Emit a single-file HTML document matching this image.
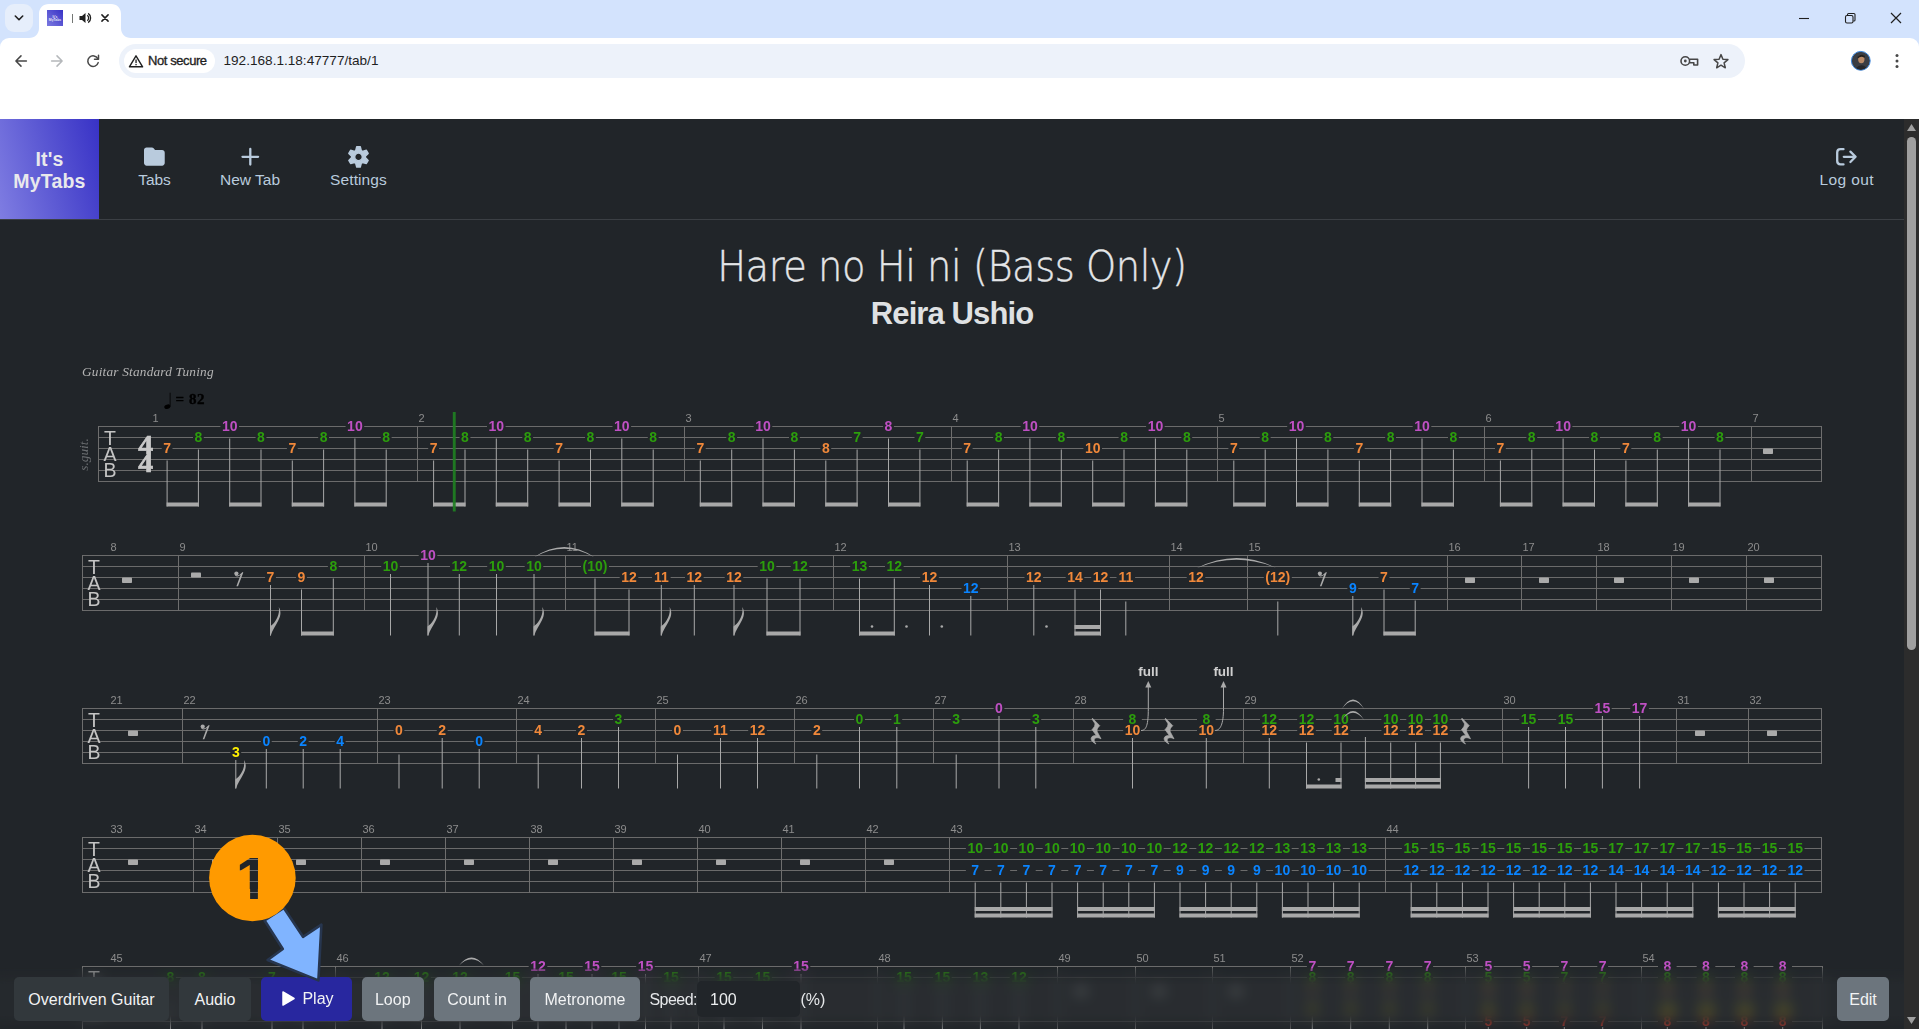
<!DOCTYPE html>
<html lang="en"><head><meta charset="utf-8"><title>It's MyTabs</title>
<style>
html,body{margin:0;padding:0}
body{width:1919px;height:1029px;overflow:hidden;position:relative;background:#212529;font-family:"Liberation Sans",sans-serif;color:#dee2e6}
.abs{position:absolute}
#tabstrip{left:0;top:0;width:1919px;height:52px;background:#d3e3fd}
#toolbar{left:0;top:38px;width:1919px;height:81px;background:#fff;border-radius:9px 9px 0 0}
#urlpill{left:119px;top:44px;width:1626px;height:34px;border-radius:17px;background:#edf2fa}
#chip{left:124px;top:49px;width:91px;height:24px;border-radius:12px;background:#fff}
.ctext{color:#1f1f1f;white-space:nowrap}
#logo{left:0;top:119px;width:99px;height:100px;background:linear-gradient(75deg,#7f7de2 0%,#5b58d3 50%,#3832c6 100%)}
#logo div{position:absolute;left:0;width:99px;text-align:center;color:#e9e9ec;font-weight:bold;font-size:19.5px;line-height:22px;letter-spacing:0.2px}
#hdrline{left:0;top:219px;width:1904px;height:1px;background:#3b3f44}
.nav{color:#b9cbdd;font-size:15.5px;white-space:nowrap;transform:translateX(-50%);line-height:18px}
#title{left:0;top:241px;-webkit-text-stroke:0.4px #e4e6e8;width:1904px;text-align:center;font-size:42.5px;line-height:52px;color:#e4e6e8;white-space:nowrap;font-family:"DejaVu Sans","Liberation Sans",sans-serif;font-weight:200}
#title span{display:inline-block;transform:scaleX(0.903);transform-origin:50% 50%;letter-spacing:-0.5px}
#artist{left:0;top:294.5px;width:1904px;text-align:center;font-size:31px;line-height:38px;font-weight:bold;color:#dfe1e3;letter-spacing:-0.9px;white-space:nowrap}
svg text.n{font-family:"Liberation Sans",sans-serif;font-weight:bold;font-size:14px;text-anchor:middle}
svg text.bn{font-family:"Liberation Sans",sans-serif;font-size:11px;fill:#8c8c8c}
svg text.clef{font-family:"Liberation Sans",sans-serif;font-size:19.5px;fill:#c4c4c4;text-anchor:middle}
svg text.ts{font-family:"Liberation Serif",serif;font-weight:bold;font-size:27px;fill:#c8c8c8;stroke:#c8c8c8;stroke-width:0.7px;text-anchor:middle}
svg text.full{font-family:"Liberation Sans",sans-serif;font-weight:bold;font-size:13.5px;fill:#cfcfcf;text-anchor:middle}
#blur{left:0;top:968px;width:1904px;height:61px;background:rgba(42,46,49,0.55);-webkit-backdrop-filter:blur(7px);backdrop-filter:blur(7px);-webkit-mask-image:linear-gradient(to bottom,rgba(0,0,0,0.3) 0,#000 26%,#000 78%,rgba(0,0,0,0.35) 100%);mask-image:linear-gradient(to bottom,rgba(0,0,0,0.3) 0,#000 26%,#000 78%,rgba(0,0,0,0.35) 100%)}
.btn{top:977px;height:44px;border-radius:5px;font-size:16px;line-height:45.5px;text-align:center;color:#f2f3f4;white-space:nowrap}
.dark{background:#32383c}
.sec{background:#6c757d}
#sb{left:1904px;top:119px;width:15px;height:910px;background:#2c2c2c}
#thumb{left:1907px;top:137px;width:9px;height:513px;border-radius:5px;background:#9f9f9f}
</style></head><body>
<!-- browser chrome -->
<div class="abs" id="tabstrip"></div>
<div class="abs" style="left:5px;top:4px;width:28px;height:28px;border-radius:9px;background:#e6eefb"></div>
<div class="abs" id="toolbar"></div>
<svg class="abs" style="left:0;top:0" width="1919" height="120" viewBox="0 0 1919 120">
  <path d="M29,38 C35,38 39,34 39,28 L39,14 C39,8 43,4 49,4 L111,4 C117,4 121,8 121,14 L121,28 C121,34 125,38 131,38 Z" fill="#fff"/>
  <path d="M15.3,16 L19,19.700 L22.700,16" fill="none" stroke="#1f1f1f" stroke-width="1.6" stroke-linecap="round" stroke-linejoin="round"/>
  <defs><linearGradient id="fav" x1="0" y1="1" x2="1" y2="0"><stop offset="0" stop-color="#7b79e0"/><stop offset="1" stop-color="#3832c6"/></linearGradient></defs>
  <rect x="47" y="10" width="16" height="16" fill="url(#fav)"/>
  <text x="55" y="17.600" text-anchor="middle" font-family="Liberation Sans, sans-serif" font-weight="bold" font-size="3.400" fill="#e6e6f6">It&#39;s</text><text x="55" y="21.400" text-anchor="middle" font-family="Liberation Sans, sans-serif" font-weight="bold" font-size="3.400" fill="#e6e6f6">MyTabs</text>
  <rect x="72" y="14" width="1" height="9" fill="#747775"/>
  <path d="M79.500,16 L82,16 L85.500,13 L85.500,23 L82,20 L79.500,20 Z" fill="#1f1f1f"/>
  <path d="M87.300,15.200 A3.600,3.600 0 0 1 87.300,20.800 M88.200,13.400 A5.600,5.600 0 0 1 88.200,22.600" fill="none" stroke="#1f1f1f" stroke-width="1.300"/>
  <path d="M101.900,14.900 L108.100,21.100 M108.100,14.900 L101.900,21.100" stroke="#1f1f1f" stroke-width="1.500" stroke-linecap="round"/>
  <!-- window controls -->
  <path d="M1799,18.500 L1809,18.500" stroke="#1f1f1f" stroke-width="1.100"/>
  <rect x="1845.500" y="15.500" width="7.500" height="7.500" rx="1.500" fill="none" stroke="#1f1f1f" stroke-width="1.100"/>
  <path d="M1847.500,15.300 L1847.500,14.600 Q1847.500,13.500 1848.600,13.500 L1853.900,13.500 Q1855,13.500 1855,14.600 L1855,19.900 Q1855,21 1853.900,21 L1853.300,21" fill="none" stroke="#1f1f1f" stroke-width="1.100"/>
  <path d="M1891,13 L1901,23 M1901,13 L1891,23" stroke="#1f1f1f" stroke-width="1.200"/>
  <!-- nav buttons -->
  <path d="M26.400,61 L16.300,61 M21,55.900 L15.900,61 L21,66.100" fill="none" stroke="#474747" stroke-width="1.500" stroke-linecap="round" stroke-linejoin="round"/>
  <path d="M51.600,61 L61.700,61 M57,55.900 L62.100,61 L57,66.100" fill="none" stroke="#b5b8bb" stroke-width="1.500" stroke-linecap="round" stroke-linejoin="round"/>
  <path d="M97.800,58.700 A5.300,5.300 0 1 0 98.200,62.600" fill="none" stroke="#474747" stroke-width="1.500" stroke-linecap="round"/>
  <path d="M98.500,55.200 L98.500,59.200 L94.500,59.200" fill="none" stroke="#474747" stroke-width="1.500" stroke-linecap="round" stroke-linejoin="round"/>
</svg>
<div class="abs" id="urlpill"></div>
<div class="abs" id="chip"></div>
<svg class="abs" style="left:0;top:38px" width="1919" height="48" viewBox="0 38 1919 48">
  <path d="M136,55.800 L142.600,66.800 L129.400,66.800 Z" fill="none" stroke="#1f1f1f" stroke-width="1.400" stroke-linejoin="round"/>
  <rect x="135.400" y="59.500" width="1.300" height="3.600" fill="#1f1f1f"/><rect x="135.400" y="64" width="1.300" height="1.300" fill="#1f1f1f"/>
  <!-- key -->
  <circle cx="1685.300" cy="61" r="4.300" fill="none" stroke="#474747" stroke-width="1.600"/><circle cx="1685.300" cy="61" r="1.400" fill="#474747"/>
  <path d="M1689.500,59.300 L1697.600,59.300 L1697.600,65 L1693.800,65 L1693.800,62.800 L1689.400,62.800" fill="none" stroke="#474747" stroke-width="1.600" stroke-linejoin="round"/>
  <!-- star -->
  <path d="M1721,54.600 L1722.900,59.200 L1727.900,59.600 L1724.100,62.900 L1725.300,67.800 L1721,65.200 L1716.700,67.800 L1717.900,62.900 L1714.100,59.600 L1719.100,59.200 Z" fill="none" stroke="#474747" stroke-width="1.500" stroke-linejoin="round"/>
  <!-- avatar -->
  <circle cx="1860.800" cy="60.800" r="9.400" fill="#3a3d44" stroke="#3f8ae0" stroke-width="1"/>
  <ellipse cx="1861.300" cy="59" rx="3.200" ry="4.200" fill="#b98a68"/><path d="M1857.500,57 Q1860.500,52.500 1865,56 L1864.500,58 Q1861,55.500 1857.800,58.500 Z" fill="#22201f"/>
  <path d="M1856,68 Q1861,63 1866.500,67.500 Q1861.500,71.500 1856,68 Z" fill="#26272b"/>
  <circle cx="1897" cy="55.600" r="1.500" fill="#474747"/><circle cx="1897" cy="61" r="1.500" fill="#474747"/><circle cx="1897" cy="66.400" r="1.500" fill="#474747"/>
</svg>
<div class="abs ctext" id="notsecure" style="left:148px;top:52px;font-size:13px;line-height:18px;letter-spacing:-0.42px;color:#1f1f1f;-webkit-text-stroke:0.35px #1f1f1f">Not secure</div>
<div class="abs ctext" id="url" style="left:223.500px;top:51px;font-size:13.600px;line-height:20px">192.168.1.18:47777/tab/1</div>

<!-- app header -->
<div class="abs" id="logo"><div style="top:29px">It's</div><div style="top:51px">MyTabs</div></div>
<div class="abs" id="hdrline"></div>
<svg class="abs" style="left:100px;top:140px" width="1804" height="36" viewBox="100 140 1804 36">
  <g transform="translate(144,146.200) scale(0.0405)"><path d="M64 480H448c35.300 0 64-28.700 64-64V160c0-35.300-28.700-64-64-64H288c-10.100 0-19.600-4.700-25.600-12.800L243.200 57.600C231.100 41.500 212.100 32 192 32H64C28.700 32 0 60.700 0 96V416c0 35.300 28.700 64 64 64z" fill="#b9cbdd"/></g>
  <path d="M250.300,149 L250.300,164.600 M242.500,156.800 L258.100,156.800" stroke="#b9cbdd" stroke-width="2.300" stroke-linecap="round"/>
  <path d="M355.69,150.60 L356.71,146.76 L360.29,146.76 L361.31,150.60 L362.56,151.32 L366.39,150.28 L368.18,153.38 L365.36,156.18 L365.36,157.62 L368.18,160.42 L366.39,163.52 L362.56,162.48 L361.31,163.20 L360.29,167.04 L356.71,167.04 L355.69,163.20 L354.44,162.48 L350.61,163.52 L348.82,160.42 L351.64,157.62 L351.64,156.18 L348.82,153.38 L350.61,150.28 L354.44,151.32 Z M362.30,156.90 A3.8,3.8 0 1,0 354.70,156.90 A3.8,3.8 0 1,0 362.30,156.90 Z" fill="#b9cbdd" fill-rule="evenodd" stroke="#b9cbdd" stroke-width="1.400" stroke-linejoin="round"/>
  <path d="M1843.500,149.200 L1840.500,149.200 Q1837.200,149.200 1837.200,152.500 L1837.200,161.100 Q1837.200,164.400 1840.500,164.400 L1843.500,164.400" fill="none" stroke="#b9cbdd" stroke-width="2.300" stroke-linecap="round"/>
  <path d="M1843.800,156.800 L1855,156.800 M1850.400,151.600 L1855.600,156.800 L1850.400,162" fill="none" stroke="#b9cbdd" stroke-width="2.300" stroke-linecap="round" stroke-linejoin="round"/>
</svg>
<div class="abs nav" style="left:154.500px;top:171px;letter-spacing:-0.1px">Tabs</div>
<div class="abs nav" style="left:250px;top:171px">New Tab</div>
<div class="abs nav" style="left:358.500px;top:171px;letter-spacing:0.1px">Settings</div>
<div class="abs nav" style="left:1846.800px;top:171px;letter-spacing:0.4px">Log out</div>

<div class="abs" id="title"><span>Hare no Hi ni (Bass Only)</span></div>
<div class="abs" id="artist">Reira Ushio</div>

<!-- score -->
<svg class="abs" style="left:0;top:355px;will-change:transform" width="1904" height="674" viewBox="0 355 1904 674">
<text x="82" y="375.800" font-family="Liberation Serif, serif" font-style="italic" font-size="13.300" letter-spacing="0.2" fill="#b4b4b4">Guitar Standard Tuning</text>
<text transform="translate(88,454.500) rotate(-90)" text-anchor="middle" font-family="Liberation Serif, serif" font-style="italic" font-size="13.300" fill="#6a6d70">s.guit.</text>
<ellipse cx="167.300" cy="406.700" rx="3.100" ry="2.100" transform="rotate(-20 167.300 406.700)" fill="#000"/><rect x="169.700" y="392.700" width="0.800" height="14" fill="#000"/>
<text x="175.500" y="403.600" font-family="Liberation Serif, serif" font-weight="bold" font-size="15" letter-spacing="0.6" fill="#000" stroke="#000" stroke-width="0.4">= 82</text>
<rect x="98" y="426" width="1724" height="1" fill="#6b6b6b"/>
<rect x="98" y="437" width="1724" height="1" fill="#6b6b6b"/>
<rect x="98" y="448" width="1724" height="1" fill="#6b6b6b"/>
<rect x="98" y="459" width="1724" height="1" fill="#6b6b6b"/>
<rect x="98" y="470" width="1724" height="1" fill="#6b6b6b"/>
<rect x="98" y="481" width="1724" height="1" fill="#6b6b6b"/>
<rect x="98" y="426" width="1" height="56" fill="#6e6e6e"/>
<rect x="417" y="426" width="1" height="56" fill="#6e6e6e"/>
<rect x="684" y="426" width="1" height="56" fill="#6e6e6e"/>
<rect x="951" y="426" width="1" height="56" fill="#6e6e6e"/>
<rect x="1217" y="426" width="1" height="56" fill="#6e6e6e"/>
<rect x="1484" y="426" width="1" height="56" fill="#6e6e6e"/>
<rect x="1751" y="426" width="1" height="56" fill="#6e6e6e"/>
<rect x="1821" y="426" width="1" height="56" fill="#6e6e6e"/>
<text x="152.5" y="422" class="bn">1</text>
<text x="418.5" y="422" class="bn">2</text>
<text x="685.5" y="422" class="bn">3</text>
<text x="952.5" y="422" class="bn">4</text>
<text x="1218.5" y="422" class="bn">5</text>
<text x="1485.5" y="422" class="bn">6</text>
<text x="1752.5" y="422" class="bn">7</text>
<text x="110" y="444.5" class="clef">T</text>
<text x="110" y="460.5" class="clef">A</text>
<text x="110" y="476.5" class="clef">B</text>
<text transform="translate(145.7,453.8) scale(1.1,1)" class="ts">4</text>
<text transform="translate(145.7,471.8) scale(1.1,1)" class="ts">4</text>
<rect x="166.6" y="502.5" width="32.3" height="4" fill="#a8a8a8"/>
<rect x="229.2" y="502.5" width="32.3" height="4" fill="#a8a8a8"/>
<rect x="291.8" y="502.5" width="32.3" height="4" fill="#a8a8a8"/>
<rect x="354.4" y="502.5" width="32.3" height="4" fill="#a8a8a8"/>
<rect x="166.6" y="460.5" width="1" height="46" fill="#a8a8a8"/>
<rect x="161.7" y="447" width="10.8" height="3" fill="#212529"/>
<text x="167.1" y="452.6" class="n" fill="#f0883a">7</text>
<rect x="197.9" y="449.5" width="1" height="57" fill="#a8a8a8"/>
<rect x="193" y="436" width="10.8" height="3" fill="#212529"/>
<text x="198.4" y="441.6" class="n" fill="#2c9e0c">8</text>
<rect x="229.2" y="438.5" width="1" height="68" fill="#a8a8a8"/>
<rect x="220.4" y="425" width="18.6" height="3" fill="#212529"/>
<text x="229.7" y="430.6" class="n" fill="#bf50c3">10</text>
<rect x="260.5" y="449.5" width="1" height="57" fill="#a8a8a8"/>
<rect x="255.6" y="436" width="10.8" height="3" fill="#212529"/>
<text x="261" y="441.6" class="n" fill="#2c9e0c">8</text>
<rect x="291.8" y="460.5" width="1" height="46" fill="#a8a8a8"/>
<rect x="286.9" y="447" width="10.8" height="3" fill="#212529"/>
<text x="292.3" y="452.6" class="n" fill="#f0883a">7</text>
<rect x="323.1" y="449.5" width="1" height="57" fill="#a8a8a8"/>
<rect x="318.2" y="436" width="10.8" height="3" fill="#212529"/>
<text x="323.6" y="441.6" class="n" fill="#2c9e0c">8</text>
<rect x="354.4" y="438.5" width="1" height="68" fill="#a8a8a8"/>
<rect x="345.6" y="425" width="18.6" height="3" fill="#212529"/>
<text x="354.9" y="430.6" class="n" fill="#bf50c3">10</text>
<rect x="385.7" y="449.5" width="1" height="57" fill="#a8a8a8"/>
<rect x="380.8" y="436" width="10.8" height="3" fill="#212529"/>
<text x="386.2" y="441.6" class="n" fill="#2c9e0c">8</text>
<rect x="433.1" y="502.5" width="32.4" height="4" fill="#a8a8a8"/>
<rect x="495.8" y="502.5" width="32.4" height="4" fill="#a8a8a8"/>
<rect x="558.6" y="502.5" width="32.4" height="4" fill="#a8a8a8"/>
<rect x="621.3" y="502.5" width="32.4" height="4" fill="#a8a8a8"/>
<rect x="433.1" y="460.5" width="1" height="46" fill="#a8a8a8"/>
<rect x="428.2" y="447" width="10.8" height="3" fill="#212529"/>
<text x="433.6" y="452.6" class="n" fill="#f0883a">7</text>
<rect x="464.5" y="449.5" width="1" height="57" fill="#a8a8a8"/>
<rect x="459.6" y="436" width="10.8" height="3" fill="#212529"/>
<text x="464.97" y="441.6" class="n" fill="#2c9e0c">8</text>
<rect x="495.8" y="438.5" width="1" height="68" fill="#a8a8a8"/>
<rect x="487" y="425" width="18.6" height="3" fill="#212529"/>
<text x="496.34" y="430.6" class="n" fill="#bf50c3">10</text>
<rect x="527.2" y="449.5" width="1" height="57" fill="#a8a8a8"/>
<rect x="522.3" y="436" width="10.8" height="3" fill="#212529"/>
<text x="527.71" y="441.6" class="n" fill="#2c9e0c">8</text>
<rect x="558.6" y="460.5" width="1" height="46" fill="#a8a8a8"/>
<rect x="553.7" y="447" width="10.8" height="3" fill="#212529"/>
<text x="559.08" y="452.6" class="n" fill="#f0883a">7</text>
<rect x="590" y="449.5" width="1" height="57" fill="#a8a8a8"/>
<rect x="585.1" y="436" width="10.8" height="3" fill="#212529"/>
<text x="590.45" y="441.6" class="n" fill="#2c9e0c">8</text>
<rect x="621.3" y="438.5" width="1" height="68" fill="#a8a8a8"/>
<rect x="612.5" y="425" width="18.6" height="3" fill="#212529"/>
<text x="621.82" y="430.6" class="n" fill="#bf50c3">10</text>
<rect x="652.7" y="449.5" width="1" height="57" fill="#a8a8a8"/>
<rect x="647.8" y="436" width="10.8" height="3" fill="#212529"/>
<text x="653.19" y="441.6" class="n" fill="#2c9e0c">8</text>
<rect x="699.8" y="502.5" width="32.4" height="4" fill="#a8a8a8"/>
<rect x="762.5" y="502.5" width="32.4" height="4" fill="#a8a8a8"/>
<rect x="825.3" y="502.5" width="32.4" height="4" fill="#a8a8a8"/>
<rect x="888" y="502.5" width="32.4" height="4" fill="#a8a8a8"/>
<rect x="699.8" y="460.5" width="1" height="46" fill="#a8a8a8"/>
<rect x="694.9" y="447" width="10.8" height="3" fill="#212529"/>
<text x="700.3" y="452.6" class="n" fill="#f0883a">7</text>
<rect x="731.2" y="449.5" width="1" height="57" fill="#a8a8a8"/>
<rect x="726.3" y="436" width="10.8" height="3" fill="#212529"/>
<text x="731.67" y="441.6" class="n" fill="#2c9e0c">8</text>
<rect x="762.5" y="438.5" width="1" height="68" fill="#a8a8a8"/>
<rect x="753.7" y="425" width="18.6" height="3" fill="#212529"/>
<text x="763.04" y="430.6" class="n" fill="#bf50c3">10</text>
<rect x="793.9" y="449.5" width="1" height="57" fill="#a8a8a8"/>
<rect x="789" y="436" width="10.8" height="3" fill="#212529"/>
<text x="794.41" y="441.6" class="n" fill="#2c9e0c">8</text>
<rect x="825.3" y="460.5" width="1" height="46" fill="#a8a8a8"/>
<rect x="820.4" y="447" width="10.8" height="3" fill="#212529"/>
<text x="825.78" y="452.6" class="n" fill="#f0883a">8</text>
<rect x="856.6" y="449.5" width="1" height="57" fill="#a8a8a8"/>
<rect x="851.8" y="436" width="10.8" height="3" fill="#212529"/>
<text x="857.15" y="441.6" class="n" fill="#2c9e0c">7</text>
<rect x="888" y="438.5" width="1" height="68" fill="#a8a8a8"/>
<rect x="883.1" y="425" width="10.8" height="3" fill="#212529"/>
<text x="888.52" y="430.6" class="n" fill="#bf50c3">8</text>
<rect x="919.4" y="449.5" width="1" height="57" fill="#a8a8a8"/>
<rect x="914.5" y="436" width="10.8" height="3" fill="#212529"/>
<text x="919.89" y="441.6" class="n" fill="#2c9e0c">7</text>
<rect x="966.7" y="502.5" width="32.4" height="4" fill="#a8a8a8"/>
<rect x="1029.4" y="502.5" width="32.4" height="4" fill="#a8a8a8"/>
<rect x="1092.2" y="502.5" width="32.4" height="4" fill="#a8a8a8"/>
<rect x="1154.9" y="502.5" width="32.4" height="4" fill="#a8a8a8"/>
<rect x="966.7" y="460.5" width="1" height="46" fill="#a8a8a8"/>
<rect x="961.8" y="447" width="10.8" height="3" fill="#212529"/>
<text x="967.2" y="452.6" class="n" fill="#f0883a">7</text>
<rect x="998.1" y="449.5" width="1" height="57" fill="#a8a8a8"/>
<rect x="993.2" y="436" width="10.8" height="3" fill="#212529"/>
<text x="998.57" y="441.6" class="n" fill="#2c9e0c">8</text>
<rect x="1029.4" y="438.5" width="1" height="68" fill="#a8a8a8"/>
<rect x="1020.6" y="425" width="18.6" height="3" fill="#212529"/>
<text x="1029.94" y="430.6" class="n" fill="#bf50c3">10</text>
<rect x="1060.8" y="449.5" width="1" height="57" fill="#a8a8a8"/>
<rect x="1055.9" y="436" width="10.8" height="3" fill="#212529"/>
<text x="1061.31" y="441.6" class="n" fill="#2c9e0c">8</text>
<rect x="1092.2" y="460.5" width="1" height="46" fill="#a8a8a8"/>
<rect x="1083.4" y="447" width="18.6" height="3" fill="#212529"/>
<text x="1092.68" y="452.6" class="n" fill="#f0883a">10</text>
<rect x="1123.5" y="449.5" width="1" height="57" fill="#a8a8a8"/>
<rect x="1118.6" y="436" width="10.8" height="3" fill="#212529"/>
<text x="1124.05" y="441.6" class="n" fill="#2c9e0c">8</text>
<rect x="1154.9" y="438.5" width="1" height="68" fill="#a8a8a8"/>
<rect x="1146.1" y="425" width="18.6" height="3" fill="#212529"/>
<text x="1155.42" y="430.6" class="n" fill="#bf50c3">10</text>
<rect x="1186.3" y="449.5" width="1" height="57" fill="#a8a8a8"/>
<rect x="1181.4" y="436" width="10.8" height="3" fill="#212529"/>
<text x="1186.79" y="441.6" class="n" fill="#2c9e0c">8</text>
<rect x="1233.3" y="502.5" width="32.4" height="4" fill="#a8a8a8"/>
<rect x="1296" y="502.5" width="32.4" height="4" fill="#a8a8a8"/>
<rect x="1358.8" y="502.5" width="32.4" height="4" fill="#a8a8a8"/>
<rect x="1421.5" y="502.5" width="32.4" height="4" fill="#a8a8a8"/>
<rect x="1233.3" y="460.5" width="1" height="46" fill="#a8a8a8"/>
<rect x="1228.4" y="447" width="10.8" height="3" fill="#212529"/>
<text x="1233.8" y="452.6" class="n" fill="#f0883a">7</text>
<rect x="1264.7" y="449.5" width="1" height="57" fill="#a8a8a8"/>
<rect x="1259.8" y="436" width="10.8" height="3" fill="#212529"/>
<text x="1265.17" y="441.6" class="n" fill="#2c9e0c">8</text>
<rect x="1296" y="438.5" width="1" height="68" fill="#a8a8a8"/>
<rect x="1287.2" y="425" width="18.6" height="3" fill="#212529"/>
<text x="1296.54" y="430.6" class="n" fill="#bf50c3">10</text>
<rect x="1327.4" y="449.5" width="1" height="57" fill="#a8a8a8"/>
<rect x="1322.5" y="436" width="10.8" height="3" fill="#212529"/>
<text x="1327.91" y="441.6" class="n" fill="#2c9e0c">8</text>
<rect x="1358.8" y="460.5" width="1" height="46" fill="#a8a8a8"/>
<rect x="1353.9" y="447" width="10.8" height="3" fill="#212529"/>
<text x="1359.28" y="452.6" class="n" fill="#f0883a">7</text>
<rect x="1390.1" y="449.5" width="1" height="57" fill="#a8a8a8"/>
<rect x="1385.2" y="436" width="10.8" height="3" fill="#212529"/>
<text x="1390.65" y="441.6" class="n" fill="#2c9e0c">8</text>
<rect x="1421.5" y="438.5" width="1" height="68" fill="#a8a8a8"/>
<rect x="1412.7" y="425" width="18.6" height="3" fill="#212529"/>
<text x="1422.02" y="430.6" class="n" fill="#bf50c3">10</text>
<rect x="1452.9" y="449.5" width="1" height="57" fill="#a8a8a8"/>
<rect x="1448" y="436" width="10.8" height="3" fill="#212529"/>
<text x="1453.39" y="441.6" class="n" fill="#2c9e0c">8</text>
<rect x="1499.9" y="502.5" width="32.4" height="4" fill="#a8a8a8"/>
<rect x="1562.6" y="502.5" width="32.4" height="4" fill="#a8a8a8"/>
<rect x="1625.4" y="502.5" width="32.4" height="4" fill="#a8a8a8"/>
<rect x="1688.1" y="502.5" width="32.4" height="4" fill="#a8a8a8"/>
<rect x="1499.9" y="460.5" width="1" height="46" fill="#a8a8a8"/>
<rect x="1495" y="447" width="10.8" height="3" fill="#212529"/>
<text x="1500.4" y="452.6" class="n" fill="#f0883a">7</text>
<rect x="1531.3" y="449.5" width="1" height="57" fill="#a8a8a8"/>
<rect x="1526.4" y="436" width="10.8" height="3" fill="#212529"/>
<text x="1531.77" y="441.6" class="n" fill="#2c9e0c">8</text>
<rect x="1562.6" y="438.5" width="1" height="68" fill="#a8a8a8"/>
<rect x="1553.8" y="425" width="18.6" height="3" fill="#212529"/>
<text x="1563.14" y="430.6" class="n" fill="#bf50c3">10</text>
<rect x="1594" y="449.5" width="1" height="57" fill="#a8a8a8"/>
<rect x="1589.1" y="436" width="10.8" height="3" fill="#212529"/>
<text x="1594.51" y="441.6" class="n" fill="#2c9e0c">8</text>
<rect x="1625.4" y="460.5" width="1" height="46" fill="#a8a8a8"/>
<rect x="1620.5" y="447" width="10.8" height="3" fill="#212529"/>
<text x="1625.88" y="452.6" class="n" fill="#f0883a">7</text>
<rect x="1656.8" y="449.5" width="1" height="57" fill="#a8a8a8"/>
<rect x="1651.8" y="436" width="10.8" height="3" fill="#212529"/>
<text x="1657.25" y="441.6" class="n" fill="#2c9e0c">8</text>
<rect x="1688.1" y="438.5" width="1" height="68" fill="#a8a8a8"/>
<rect x="1679.3" y="425" width="18.6" height="3" fill="#212529"/>
<text x="1688.62" y="430.6" class="n" fill="#bf50c3">10</text>
<rect x="1719.5" y="449.5" width="1" height="57" fill="#a8a8a8"/>
<rect x="1714.6" y="436" width="10.8" height="3" fill="#212529"/>
<text x="1719.99" y="441.6" class="n" fill="#2c9e0c">8</text>
<rect x="1763" y="448.4" width="10" height="5.6" fill="#aaaaaa" rx="0.8"/>
<rect x="82" y="555" width="1740" height="1" fill="#6b6b6b"/>
<rect x="82" y="566" width="1740" height="1" fill="#6b6b6b"/>
<rect x="82" y="577" width="1740" height="1" fill="#6b6b6b"/>
<rect x="82" y="588" width="1740" height="1" fill="#6b6b6b"/>
<rect x="82" y="599" width="1740" height="1" fill="#6b6b6b"/>
<rect x="82" y="610" width="1740" height="1" fill="#6b6b6b"/>
<rect x="82" y="555" width="1" height="56" fill="#6e6e6e"/>
<rect x="178" y="555" width="1" height="56" fill="#6e6e6e"/>
<rect x="364" y="555" width="1" height="56" fill="#6e6e6e"/>
<rect x="565" y="555" width="1" height="56" fill="#6e6e6e"/>
<rect x="833" y="555" width="1" height="56" fill="#6e6e6e"/>
<rect x="1007" y="555" width="1" height="56" fill="#6e6e6e"/>
<rect x="1169" y="555" width="1" height="56" fill="#6e6e6e"/>
<rect x="1247" y="555" width="1" height="56" fill="#6e6e6e"/>
<rect x="1447" y="555" width="1" height="56" fill="#6e6e6e"/>
<rect x="1521" y="555" width="1" height="56" fill="#6e6e6e"/>
<rect x="1596" y="555" width="1" height="56" fill="#6e6e6e"/>
<rect x="1671" y="555" width="1" height="56" fill="#6e6e6e"/>
<rect x="1746" y="555" width="1" height="56" fill="#6e6e6e"/>
<rect x="1821" y="555" width="1" height="56" fill="#6e6e6e"/>
<text x="110.5" y="551" class="bn">8</text>
<text x="179.5" y="551" class="bn">9</text>
<text x="365.5" y="551" class="bn">10</text>
<text x="566.5" y="551" class="bn">11</text>
<text x="834.5" y="551" class="bn">12</text>
<text x="1008.5" y="551" class="bn">13</text>
<text x="1170.5" y="551" class="bn">14</text>
<text x="1248.5" y="551" class="bn">15</text>
<text x="1448.5" y="551" class="bn">16</text>
<text x="1522.5" y="551" class="bn">17</text>
<text x="1597.5" y="551" class="bn">18</text>
<text x="1672.5" y="551" class="bn">19</text>
<text x="1747.5" y="551" class="bn">20</text>
<text x="94" y="573.5" class="clef">T</text>
<text x="94" y="589.5" class="clef">A</text>
<text x="94" y="605.5" class="clef">B</text>
<rect x="122" y="577.4" width="10" height="5.6" fill="#aaaaaa" rx="0.8"/>
<rect x="191" y="572.5" width="10" height="5" fill="#aaaaaa" rx="0.8"/>
<circle cx="236.4" cy="573.6" r="2.1" fill="#aaaaaa"/>
<path d="M235,574.8 Q238.5,576.8 242.6,572 L243.3,572.5 L238,586.3 L236.4,586.3 L240.6,574.8 Q238,577.3 235.5,576 Z" fill="#aaaaaa"/>
<rect x="270" y="585" width="1" height="50.5" fill="#a8a8a8"/>
<path d="M270,635.5 L270,626.5 C272,625 274,623.5 276,620 C278.5,616 279.5,611.5 278.8,607 C281.3,611.5 280.8,615.5 278.3,620.5 C276,625.5 272,630.5 270.8,635.5 Z" fill="#aaaaaa"/>
<rect x="265.1" y="576" width="10.8" height="3" fill="#212529"/>
<text x="270.5" y="581.6" class="n" fill="#f0883a">7</text>
<rect x="301" y="631.5" width="32.8" height="4" fill="#a8a8a8"/>
<rect x="301" y="589.5" width="1" height="46" fill="#a8a8a8"/>
<rect x="296.1" y="576" width="10.8" height="3" fill="#212529"/>
<text x="301.5" y="581.6" class="n" fill="#f0883a">9</text>
<rect x="332.8" y="578.5" width="1" height="57" fill="#a8a8a8"/>
<rect x="327.9" y="565" width="10.8" height="3" fill="#212529"/>
<text x="333.3" y="570.6" class="n" fill="#2c9e0c">8</text>
<rect x="390" y="574" width="1" height="61.5" fill="#a8a8a8"/>
<rect x="381.2" y="565" width="18.6" height="3" fill="#212529"/>
<text x="390.5" y="570.6" class="n" fill="#2c9e0c">10</text>
<rect x="427.5" y="563" width="1" height="72.5" fill="#a8a8a8"/>
<path d="M427.5,635.5 L427.5,626.5 C429.5,625 431.5,623.5 433.5,620 C436,616 437,611.5 436.3,607 C438.8,611.5 438.3,615.5 435.8,620.5 C433.5,625.5 429.5,630.5 428.3,635.5 Z" fill="#aaaaaa"/>
<rect x="418.7" y="554" width="18.6" height="3" fill="#212529"/>
<text x="428" y="559.6" class="n" fill="#bf50c3">10</text>
<rect x="458.8" y="574" width="1" height="61.5" fill="#a8a8a8"/>
<rect x="450" y="565" width="18.6" height="3" fill="#212529"/>
<text x="459.3" y="570.6" class="n" fill="#2c9e0c">12</text>
<rect x="496" y="574" width="1" height="61.5" fill="#a8a8a8"/>
<rect x="487.2" y="565" width="18.6" height="3" fill="#212529"/>
<text x="496.5" y="570.6" class="n" fill="#2c9e0c">10</text>
<rect x="533.5" y="574" width="1" height="61.5" fill="#a8a8a8"/>
<path d="M533.5,635.5 L533.5,626.5 C535.5,625 537.5,623.5 539.5,620 C542,616 543,611.5 542.3,607 C544.8,611.5 544.3,615.5 541.8,620.5 C539.5,625.5 535.5,630.5 534.3,635.5 Z" fill="#aaaaaa"/>
<rect x="524.7" y="565" width="18.6" height="3" fill="#212529"/>
<text x="534" y="570.6" class="n" fill="#2c9e0c">10</text>
<path d="M534.5,557 Q564.25,537 594,557 Q564.25,540.4 534.5,557 Z" fill="#aaaaaa"/>
<rect x="594.5" y="631.5" width="35" height="4" fill="#a8a8a8"/>
<rect x="594.5" y="578.5" width="1" height="57" fill="#a8a8a8"/>
<rect x="581" y="565" width="28" height="3" fill="#212529"/>
<text x="595" y="570.6" class="n" fill="#2c9e0c">(10)</text>
<rect x="628.5" y="589.5" width="1" height="46" fill="#a8a8a8"/>
<rect x="619.7" y="576" width="18.6" height="3" fill="#212529"/>
<text x="629" y="581.6" class="n" fill="#f0883a">12</text>
<rect x="660.8" y="585" width="1" height="50.5" fill="#a8a8a8"/>
<path d="M660.8,635.5 L660.8,626.5 C662.8,625 664.8,623.5 666.8,620 C669.3,616 670.3,611.5 669.6,607 C672.1,611.5 671.6,615.5 669.1,620.5 C666.8,625.5 662.8,630.5 661.6,635.5 Z" fill="#aaaaaa"/>
<rect x="652" y="576" width="18.6" height="3" fill="#212529"/>
<text x="661.3" y="581.6" class="n" fill="#f0883a">11</text>
<rect x="693.8" y="585" width="1" height="50.5" fill="#a8a8a8"/>
<rect x="685" y="576" width="18.6" height="3" fill="#212529"/>
<text x="694.3" y="581.6" class="n" fill="#f0883a">12</text>
<rect x="733.5" y="585" width="1" height="50.5" fill="#a8a8a8"/>
<path d="M733.5,635.5 L733.5,626.5 C735.5,625 737.5,623.5 739.5,620 C742,616 743,611.5 742.3,607 C744.8,611.5 744.3,615.5 741.8,620.5 C739.5,625.5 735.5,630.5 734.3,635.5 Z" fill="#aaaaaa"/>
<rect x="724.7" y="576" width="18.6" height="3" fill="#212529"/>
<text x="734" y="581.6" class="n" fill="#f0883a">12</text>
<rect x="766.5" y="631.5" width="34" height="4" fill="#a8a8a8"/>
<rect x="766.5" y="578.5" width="1" height="57" fill="#a8a8a8"/>
<rect x="757.7" y="565" width="18.6" height="3" fill="#212529"/>
<text x="767" y="570.6" class="n" fill="#2c9e0c">10</text>
<rect x="799.5" y="578.5" width="1" height="57" fill="#a8a8a8"/>
<rect x="790.7" y="565" width="18.6" height="3" fill="#212529"/>
<text x="800" y="570.6" class="n" fill="#2c9e0c">12</text>
<rect x="859" y="631.5" width="35.8" height="4" fill="#a8a8a8"/>
<rect x="859" y="578.5" width="1" height="57" fill="#a8a8a8"/>
<rect x="850.2" y="565" width="18.6" height="3" fill="#212529"/>
<text x="859.5" y="570.6" class="n" fill="#2c9e0c">13</text>
<rect x="893.8" y="578.5" width="1" height="57" fill="#a8a8a8"/>
<rect x="885" y="565" width="18.6" height="3" fill="#212529"/>
<text x="894.3" y="570.6" class="n" fill="#2c9e0c">12</text>
<circle cx="872" cy="626.5" r="1.3" fill="#aaaaaa"/>
<circle cx="906.5" cy="626.5" r="1.3" fill="#aaaaaa"/>
<rect x="929" y="585" width="1" height="50.5" fill="#a8a8a8"/>
<rect x="920.2" y="576" width="18.6" height="3" fill="#212529"/>
<text x="929.5" y="581.6" class="n" fill="#f0883a">12</text>
<circle cx="941.8" cy="626.5" r="1.3" fill="#aaaaaa"/>
<rect x="970.3" y="596" width="1" height="39.5" fill="#a8a8a8"/>
<rect x="961.5" y="587" width="18.6" height="3" fill="#212529"/>
<text x="970.8" y="592.6" class="n" fill="#0a84ff">12</text>
<rect x="1033.3" y="585" width="1" height="50.5" fill="#a8a8a8"/>
<rect x="1024.5" y="576" width="18.6" height="3" fill="#212529"/>
<text x="1033.8" y="581.6" class="n" fill="#f0883a">12</text>
<circle cx="1046.5" cy="626.5" r="1.3" fill="#aaaaaa"/>
<rect x="1074.5" y="631.5" width="26.5" height="4" fill="#a8a8a8"/>
<rect x="1074.5" y="625" width="26.5" height="4" fill="#a8a8a8"/>
<rect x="1074.5" y="589.5" width="1" height="46" fill="#a8a8a8"/>
<rect x="1065.7" y="576" width="18.6" height="3" fill="#212529"/>
<text x="1075" y="581.6" class="n" fill="#f0883a">14</text>
<rect x="1100" y="589.5" width="1" height="46" fill="#a8a8a8"/>
<rect x="1091.2" y="576" width="18.6" height="3" fill="#212529"/>
<text x="1100.5" y="581.6" class="n" fill="#f0883a">12</text>
<rect x="1125.3" y="601.5" width="1" height="34" fill="#a8a8a8"/>
<rect x="1116.5" y="576" width="18.6" height="3" fill="#212529"/>
<text x="1125.8" y="581.6" class="n" fill="#f0883a">11</text>
<rect x="1186.7" y="576" width="18.6" height="3" fill="#212529"/>
<text x="1196" y="581.6" class="n" fill="#f0883a">12</text>
<path d="M1197,568 Q1236.5,548 1276,568 Q1236.5,551.4 1197,568 Z" fill="#aaaaaa"/>
<rect x="1277.3" y="601.5" width="1" height="34" fill="#a8a8a8"/>
<rect x="1263.8" y="576" width="28" height="3" fill="#212529"/>
<text x="1277.8" y="581.6" class="n" fill="#f0883a">(12)</text>
<circle cx="1319.9" cy="573.6" r="2.1" fill="#aaaaaa"/>
<path d="M1318.5,574.8 Q1322,576.8 1326.1,572 L1326.8,572.5 L1321.5,586.3 L1319.9,586.3 L1324.1,574.8 Q1321.5,577.3 1319,576 Z" fill="#aaaaaa"/>
<rect x="1352.3" y="596" width="1" height="39.5" fill="#a8a8a8"/>
<path d="M1352.3,635.5 L1352.3,626.5 C1354.3,625 1356.3,623.5 1358.3,620 C1360.8,616 1361.8,611.5 1361.1,607 C1363.6,611.5 1363.1,615.5 1360.6,620.5 C1358.3,625.5 1354.3,630.5 1353.1,635.5 Z" fill="#aaaaaa"/>
<rect x="1347.4" y="587" width="10.8" height="3" fill="#212529"/>
<text x="1352.8" y="592.6" class="n" fill="#0a84ff">9</text>
<rect x="1383.5" y="631.5" width="32.2" height="4" fill="#a8a8a8"/>
<rect x="1383.5" y="589.5" width="1" height="46" fill="#a8a8a8"/>
<rect x="1378.6" y="576" width="10.8" height="3" fill="#212529"/>
<text x="1384" y="581.6" class="n" fill="#f0883a">7</text>
<rect x="1414.7" y="600.5" width="1" height="35" fill="#a8a8a8"/>
<rect x="1409.8" y="587" width="10.8" height="3" fill="#212529"/>
<text x="1415.2" y="592.6" class="n" fill="#0a84ff">7</text>
<rect x="1465" y="577.4" width="10" height="5.6" fill="#aaaaaa" rx="0.8"/>
<rect x="1539" y="577.4" width="10" height="5.6" fill="#aaaaaa" rx="0.8"/>
<rect x="1614" y="577.4" width="10" height="5.6" fill="#aaaaaa" rx="0.8"/>
<rect x="1689" y="577.4" width="10" height="5.6" fill="#aaaaaa" rx="0.8"/>
<rect x="1764" y="577.4" width="10" height="5.6" fill="#aaaaaa" rx="0.8"/>
<rect x="82" y="708" width="1740" height="1" fill="#6b6b6b"/>
<rect x="82" y="719" width="1740" height="1" fill="#6b6b6b"/>
<rect x="82" y="730" width="1740" height="1" fill="#6b6b6b"/>
<rect x="82" y="741" width="1740" height="1" fill="#6b6b6b"/>
<rect x="82" y="752" width="1740" height="1" fill="#6b6b6b"/>
<rect x="82" y="763" width="1740" height="1" fill="#6b6b6b"/>
<rect x="82" y="708" width="1" height="56" fill="#6e6e6e"/>
<rect x="182" y="708" width="1" height="56" fill="#6e6e6e"/>
<rect x="377" y="708" width="1" height="56" fill="#6e6e6e"/>
<rect x="516" y="708" width="1" height="56" fill="#6e6e6e"/>
<rect x="655" y="708" width="1" height="56" fill="#6e6e6e"/>
<rect x="794" y="708" width="1" height="56" fill="#6e6e6e"/>
<rect x="933" y="708" width="1" height="56" fill="#6e6e6e"/>
<rect x="1073" y="708" width="1" height="56" fill="#6e6e6e"/>
<rect x="1243" y="708" width="1" height="56" fill="#6e6e6e"/>
<rect x="1502" y="708" width="1" height="56" fill="#6e6e6e"/>
<rect x="1676" y="708" width="1" height="56" fill="#6e6e6e"/>
<rect x="1748" y="708" width="1" height="56" fill="#6e6e6e"/>
<rect x="1821" y="708" width="1" height="56" fill="#6e6e6e"/>
<text x="110.5" y="704" class="bn">21</text>
<text x="183.5" y="704" class="bn">22</text>
<text x="378.5" y="704" class="bn">23</text>
<text x="517.5" y="704" class="bn">24</text>
<text x="656.5" y="704" class="bn">25</text>
<text x="795.5" y="704" class="bn">26</text>
<text x="934.5" y="704" class="bn">27</text>
<text x="1074.5" y="704" class="bn">28</text>
<text x="1244.5" y="704" class="bn">29</text>
<text x="1503.5" y="704" class="bn">30</text>
<text x="1677.5" y="704" class="bn">31</text>
<text x="1749.5" y="704" class="bn">32</text>
<text x="94" y="726.5" class="clef">T</text>
<text x="94" y="742.5" class="clef">A</text>
<text x="94" y="758.5" class="clef">B</text>
<rect x="128" y="730.4" width="10" height="5.6" fill="#aaaaaa" rx="0.8"/>
<circle cx="202.7" cy="726.6" r="2.1" fill="#aaaaaa"/>
<path d="M201.3,727.8 Q204.8,729.8 208.9,725 L209.6,725.5 L204.3,739.3 L202.7,739.3 L206.9,727.8 Q204.3,730.3 201.8,729 Z" fill="#aaaaaa"/>
<rect x="235.3" y="760" width="1" height="28.5" fill="#a8a8a8"/>
<path d="M235.3,788.5 L235.3,779.5 C237.3,778 239.3,776.5 241.3,773 C243.8,769 244.8,764.5 244.1,760 C246.6,764.5 246.1,768.5 243.6,773.5 C241.3,778.5 237.3,783.5 236.1,788.5 Z" fill="#aaaaaa"/>
<rect x="230.4" y="751" width="10.8" height="3" fill="#212529"/>
<text x="235.8" y="756.6" class="n" fill="#fff000">3</text>
<rect x="265.8" y="749" width="1" height="39.5" fill="#a8a8a8"/>
<rect x="260.9" y="740" width="10.8" height="3" fill="#212529"/>
<text x="266.3" y="745.6" class="n" fill="#0a84ff">0</text>
<rect x="302.7" y="749" width="1" height="39.5" fill="#a8a8a8"/>
<rect x="297.8" y="740" width="10.8" height="3" fill="#212529"/>
<text x="303.2" y="745.6" class="n" fill="#0a84ff">2</text>
<rect x="339.7" y="749" width="1" height="39.5" fill="#a8a8a8"/>
<rect x="334.8" y="740" width="10.8" height="3" fill="#212529"/>
<text x="340.2" y="745.6" class="n" fill="#0a84ff">4</text>
<rect x="398.5" y="754.5" width="1" height="34" fill="#a8a8a8"/>
<rect x="393.6" y="729" width="10.8" height="3" fill="#212529"/>
<text x="399" y="734.6" class="n" fill="#f0883a">0</text>
<rect x="441.7" y="738" width="1" height="50.5" fill="#a8a8a8"/>
<rect x="436.8" y="729" width="10.8" height="3" fill="#212529"/>
<text x="442.2" y="734.6" class="n" fill="#f0883a">2</text>
<rect x="478.7" y="749" width="1" height="39.5" fill="#a8a8a8"/>
<rect x="473.8" y="740" width="10.8" height="3" fill="#212529"/>
<text x="479.2" y="745.6" class="n" fill="#0a84ff">0</text>
<rect x="537.7" y="754.5" width="1" height="34" fill="#a8a8a8"/>
<rect x="532.8" y="729" width="10.8" height="3" fill="#212529"/>
<text x="538.2" y="734.6" class="n" fill="#f0883a">4</text>
<rect x="581" y="738" width="1" height="50.5" fill="#a8a8a8"/>
<rect x="576.1" y="729" width="10.8" height="3" fill="#212529"/>
<text x="581.5" y="734.6" class="n" fill="#f0883a">2</text>
<rect x="618" y="727" width="1" height="61.5" fill="#a8a8a8"/>
<rect x="613.1" y="718" width="10.8" height="3" fill="#212529"/>
<text x="618.5" y="723.6" class="n" fill="#2c9e0c">3</text>
<rect x="677" y="754.5" width="1" height="34" fill="#a8a8a8"/>
<rect x="672.1" y="729" width="10.8" height="3" fill="#212529"/>
<text x="677.5" y="734.6" class="n" fill="#f0883a">0</text>
<rect x="720" y="738" width="1" height="50.5" fill="#a8a8a8"/>
<rect x="711.2" y="729" width="18.6" height="3" fill="#212529"/>
<text x="720.5" y="734.6" class="n" fill="#f0883a">11</text>
<rect x="757" y="738" width="1" height="50.5" fill="#a8a8a8"/>
<rect x="748.2" y="729" width="18.6" height="3" fill="#212529"/>
<text x="757.5" y="734.6" class="n" fill="#f0883a">12</text>
<rect x="816.3" y="754.5" width="1" height="34" fill="#a8a8a8"/>
<rect x="811.4" y="729" width="10.8" height="3" fill="#212529"/>
<text x="816.8" y="734.6" class="n" fill="#f0883a">2</text>
<rect x="859" y="727" width="1" height="61.5" fill="#a8a8a8"/>
<rect x="854.1" y="718" width="10.8" height="3" fill="#212529"/>
<text x="859.5" y="723.6" class="n" fill="#2c9e0c">0</text>
<rect x="896.3" y="727" width="1" height="61.5" fill="#a8a8a8"/>
<rect x="891.4" y="718" width="10.8" height="3" fill="#212529"/>
<text x="896.8" y="723.6" class="n" fill="#2c9e0c">1</text>
<rect x="955.7" y="754.5" width="1" height="34" fill="#a8a8a8"/>
<rect x="950.8" y="718" width="10.8" height="3" fill="#212529"/>
<text x="956.2" y="723.6" class="n" fill="#2c9e0c">3</text>
<rect x="998.5" y="716" width="1" height="72.5" fill="#a8a8a8"/>
<rect x="993.6" y="707" width="10.8" height="3" fill="#212529"/>
<text x="999" y="712.6" class="n" fill="#bf50c3">0</text>
<rect x="1035.3" y="727" width="1" height="61.5" fill="#a8a8a8"/>
<rect x="1030.4" y="718" width="10.8" height="3" fill="#212529"/>
<text x="1035.8" y="723.6" class="n" fill="#2c9e0c">3</text>
<path d="M1092.5,718.3 L1099.8,725.7 C1097,728.3 1096.5,730.3 1097.5,732.3 L1101,738.8 C1097,736.8 1094,737.8 1094.2,740.3 C1094.3,741.8 1095,743.1 1096,744 C1092.5,742.3 1090.5,739.8 1091.3,737.8 C1092,735.8 1094.5,735.3 1096.5,735.8 L1092,729.5 C1094,727.8 1095.5,725.3 1094.8,723.3 L1092,719.1 Z" fill="#aaaaaa" stroke="#aaaaaa" stroke-width="0.7" stroke-linejoin="round"/>
<rect x="1132" y="738" width="1" height="50.5" fill="#a8a8a8"/>
<rect x="1123.2" y="718" width="18.6" height="3" fill="#212529"/>
<text x="1132.5" y="723.6" class="n" fill="#2c9e0c">8</text>
<rect x="1123.2" y="729" width="18.6" height="3" fill="#212529"/>
<text x="1132.5" y="734.6" class="n" fill="#f0883a">10</text>
<path d="M1141,730.5 C1146.5,730.5 1148.3,724.5 1148.3,708.5 L1148.3,686" fill="none" stroke="#aaaaaa" stroke-width="1"/>
<path d="M1148.3,681 L1151.3,687.5 L1145.3,687.5 Z" fill="#aaaaaa"/>
<text x="1148.3" y="675.5" class="full">full</text>
<path d="M1165.5,718.3 L1172.8,725.7 C1170,728.3 1169.5,730.3 1170.5,732.3 L1174,738.8 C1170,736.8 1167,737.8 1167.2,740.3 C1167.3,741.8 1168,743.1 1169,744 C1165.5,742.3 1163.5,739.8 1164.3,737.8 C1165,735.8 1167.5,735.3 1169.5,735.8 L1165,729.5 C1167,727.8 1168.5,725.3 1167.8,723.3 L1165,719.1 Z" fill="#aaaaaa" stroke="#aaaaaa" stroke-width="0.7" stroke-linejoin="round"/>
<rect x="1205.8" y="738" width="1" height="50.5" fill="#a8a8a8"/>
<rect x="1197" y="718" width="18.6" height="3" fill="#212529"/>
<text x="1206.3" y="723.6" class="n" fill="#2c9e0c">8</text>
<rect x="1197" y="729" width="18.6" height="3" fill="#212529"/>
<text x="1206.3" y="734.6" class="n" fill="#f0883a">10</text>
<path d="M1214.8,730.5 C1220.3,730.5 1223.5,724.5 1223.5,708.5 L1223.5,686" fill="none" stroke="#aaaaaa" stroke-width="1"/>
<path d="M1223.5,681 L1226.5,687.5 L1220.5,687.5 Z" fill="#aaaaaa"/>
<text x="1223.5" y="675.5" class="full">full</text>
<rect x="1268.8" y="738" width="1" height="50.5" fill="#a8a8a8"/>
<rect x="1260" y="718" width="18.6" height="3" fill="#212529"/>
<text x="1269.3" y="723.6" class="n" fill="#2c9e0c">12</text>
<rect x="1260" y="729" width="18.6" height="3" fill="#212529"/>
<text x="1269.3" y="734.6" class="n" fill="#f0883a">12</text>
<rect x="1306" y="784.5" width="35.5" height="4" fill="#a8a8a8"/>
<rect x="1335.5" y="778" width="6" height="4" fill="#a8a8a8"/>
<rect x="1306" y="742.5" width="1" height="46" fill="#a8a8a8"/>
<rect x="1297.2" y="718" width="18.6" height="3" fill="#212529"/>
<text x="1306.5" y="723.6" class="n" fill="#2c9e0c">12</text>
<rect x="1297.2" y="729" width="18.6" height="3" fill="#212529"/>
<text x="1306.5" y="734.6" class="n" fill="#f0883a">12</text>
<rect x="1340.5" y="742.5" width="1" height="46" fill="#a8a8a8"/>
<rect x="1331.7" y="718" width="18.6" height="3" fill="#212529"/>
<text x="1341" y="723.6" class="n" fill="#2c9e0c">10</text>
<rect x="1331.7" y="729" width="18.6" height="3" fill="#212529"/>
<text x="1341" y="734.6" class="n" fill="#f0883a">12</text>
<circle cx="1318.8" cy="779.5" r="1.3" fill="#aaaaaa"/>
<path d="M1341.5,709.5 Q1353,689.5 1364.5,709.5 Q1353,692.9 1341.5,709.5 Z" fill="#aaaaaa"/>
<path d="M1341.5,720.5 Q1353,701.5 1364.5,720.5 Q1353,704.9 1341.5,720.5 Z" fill="#aaaaaa"/>
<rect x="1364.9" y="784.5" width="76" height="4" fill="#a8a8a8"/>
<rect x="1364.9" y="778" width="76" height="4" fill="#a8a8a8"/>
<rect x="1364.9" y="737" width="1" height="51.5" fill="#a8a8a8"/>
<rect x="1390.2" y="742.5" width="1" height="46" fill="#a8a8a8"/>
<rect x="1381.4" y="718" width="18.6" height="3" fill="#212529"/>
<text x="1390.7" y="723.6" class="n" fill="#2c9e0c">10</text>
<rect x="1381.4" y="729" width="18.6" height="3" fill="#212529"/>
<text x="1390.7" y="734.6" class="n" fill="#f0883a">12</text>
<rect x="1415.1" y="742.5" width="1" height="46" fill="#a8a8a8"/>
<rect x="1406.3" y="718" width="18.6" height="3" fill="#212529"/>
<text x="1415.6" y="723.6" class="n" fill="#2c9e0c">10</text>
<rect x="1406.3" y="729" width="18.6" height="3" fill="#212529"/>
<text x="1415.6" y="734.6" class="n" fill="#f0883a">12</text>
<rect x="1439.9" y="742.5" width="1" height="46" fill="#a8a8a8"/>
<rect x="1431.1" y="718" width="18.6" height="3" fill="#212529"/>
<text x="1440.4" y="723.6" class="n" fill="#2c9e0c">10</text>
<rect x="1431.1" y="729" width="18.6" height="3" fill="#212529"/>
<text x="1440.4" y="734.6" class="n" fill="#f0883a">12</text>
<path d="M1462,718.3 L1469.3,725.7 C1466.5,728.3 1466,730.3 1467,732.3 L1470.5,738.8 C1466.5,736.8 1463.5,737.8 1463.7,740.3 C1463.8,741.8 1464.5,743.1 1465.5,744 C1462,742.3 1460,739.8 1460.8,737.8 C1461.5,735.8 1464,735.3 1466,735.8 L1461.5,729.5 C1463.5,727.8 1465,725.3 1464.3,723.3 L1461.5,719.1 Z" fill="#aaaaaa" stroke="#aaaaaa" stroke-width="0.7" stroke-linejoin="round"/>
<rect x="1528.1" y="727" width="1" height="61.5" fill="#a8a8a8"/>
<rect x="1519.3" y="718" width="18.6" height="3" fill="#212529"/>
<text x="1528.6" y="723.6" class="n" fill="#2c9e0c">15</text>
<rect x="1565" y="727" width="1" height="61.5" fill="#a8a8a8"/>
<rect x="1556.2" y="718" width="18.6" height="3" fill="#212529"/>
<text x="1565.5" y="723.6" class="n" fill="#2c9e0c">15</text>
<rect x="1601.9" y="716" width="1" height="72.5" fill="#a8a8a8"/>
<rect x="1593.1" y="707" width="18.6" height="3" fill="#212529"/>
<text x="1602.4" y="712.6" class="n" fill="#bf50c3">15</text>
<rect x="1639.1" y="716" width="1" height="72.5" fill="#a8a8a8"/>
<rect x="1630.3" y="707" width="18.6" height="3" fill="#212529"/>
<text x="1639.6" y="712.6" class="n" fill="#bf50c3">17</text>
<rect x="1695" y="730.4" width="10" height="5.6" fill="#aaaaaa" rx="0.8"/>
<rect x="1767" y="730.4" width="10" height="5.6" fill="#aaaaaa" rx="0.8"/>
<rect x="82" y="837" width="1740" height="1" fill="#6b6b6b"/>
<rect x="82" y="848" width="1740" height="1" fill="#6b6b6b"/>
<rect x="82" y="859" width="1740" height="1" fill="#6b6b6b"/>
<rect x="82" y="870" width="1740" height="1" fill="#6b6b6b"/>
<rect x="82" y="881" width="1740" height="1" fill="#6b6b6b"/>
<rect x="82" y="892" width="1740" height="1" fill="#6b6b6b"/>
<rect x="82" y="837" width="1" height="56" fill="#6e6e6e"/>
<rect x="193" y="837" width="1" height="56" fill="#6e6e6e"/>
<rect x="277" y="837" width="1" height="56" fill="#6e6e6e"/>
<rect x="361" y="837" width="1" height="56" fill="#6e6e6e"/>
<rect x="445" y="837" width="1" height="56" fill="#6e6e6e"/>
<rect x="529" y="837" width="1" height="56" fill="#6e6e6e"/>
<rect x="613" y="837" width="1" height="56" fill="#6e6e6e"/>
<rect x="697" y="837" width="1" height="56" fill="#6e6e6e"/>
<rect x="781" y="837" width="1" height="56" fill="#6e6e6e"/>
<rect x="865" y="837" width="1" height="56" fill="#6e6e6e"/>
<rect x="949" y="837" width="1" height="56" fill="#6e6e6e"/>
<rect x="1385" y="837" width="1" height="56" fill="#6e6e6e"/>
<rect x="1821" y="837" width="1" height="56" fill="#6e6e6e"/>
<text x="110.5" y="833" class="bn">33</text>
<text x="194.5" y="833" class="bn">34</text>
<text x="278.5" y="833" class="bn">35</text>
<text x="362.5" y="833" class="bn">36</text>
<text x="446.5" y="833" class="bn">37</text>
<text x="530.5" y="833" class="bn">38</text>
<text x="614.5" y="833" class="bn">39</text>
<text x="698.5" y="833" class="bn">40</text>
<text x="782.5" y="833" class="bn">41</text>
<text x="866.5" y="833" class="bn">42</text>
<text x="950.5" y="833" class="bn">43</text>
<text x="1386.5" y="833" class="bn">44</text>
<text x="94" y="855.5" class="clef">T</text>
<text x="94" y="871.5" class="clef">A</text>
<text x="94" y="887.5" class="clef">B</text>
<rect x="128" y="859.4" width="10" height="5.6" fill="#aaaaaa" rx="0.8"/>
<rect x="212" y="859.4" width="10" height="5.6" fill="#aaaaaa" rx="0.8"/>
<rect x="296" y="859.4" width="10" height="5.6" fill="#aaaaaa" rx="0.8"/>
<rect x="380" y="859.4" width="10" height="5.6" fill="#aaaaaa" rx="0.8"/>
<rect x="464" y="859.4" width="10" height="5.6" fill="#aaaaaa" rx="0.8"/>
<rect x="548" y="859.4" width="10" height="5.6" fill="#aaaaaa" rx="0.8"/>
<rect x="632" y="859.4" width="10" height="5.6" fill="#aaaaaa" rx="0.8"/>
<rect x="716" y="859.4" width="10" height="5.6" fill="#aaaaaa" rx="0.8"/>
<rect x="800" y="859.4" width="10" height="5.6" fill="#aaaaaa" rx="0.8"/>
<rect x="884" y="859.4" width="10" height="5.6" fill="#aaaaaa" rx="0.8"/>
<rect x="974.7" y="913.5" width="77.8" height="4" fill="#a8a8a8"/>
<rect x="974.7" y="907" width="77.8" height="4" fill="#a8a8a8"/>
<rect x="1077.1" y="913.5" width="77.8" height="4" fill="#a8a8a8"/>
<rect x="1077.1" y="907" width="77.8" height="4" fill="#a8a8a8"/>
<rect x="1179.5" y="913.5" width="77.8" height="4" fill="#a8a8a8"/>
<rect x="1179.5" y="907" width="77.8" height="4" fill="#a8a8a8"/>
<rect x="1281.9" y="913.5" width="77.8" height="4" fill="#a8a8a8"/>
<rect x="1281.9" y="907" width="77.8" height="4" fill="#a8a8a8"/>
<rect x="974.7" y="882.5" width="1" height="35" fill="#a8a8a8"/>
<rect x="965.9" y="847" width="18.6" height="3" fill="#212529"/>
<text x="975.2" y="852.6" class="n" fill="#2c9e0c">10</text>
<rect x="965.9" y="869" width="18.6" height="3" fill="#212529"/>
<text x="975.2" y="874.6" class="n" fill="#0a84ff">7</text>
<rect x="1000.3" y="882.5" width="1" height="35" fill="#a8a8a8"/>
<rect x="991.5" y="847" width="18.6" height="3" fill="#212529"/>
<text x="1000.8" y="852.6" class="n" fill="#2c9e0c">10</text>
<rect x="991.5" y="869" width="18.6" height="3" fill="#212529"/>
<text x="1000.8" y="874.6" class="n" fill="#0a84ff">7</text>
<rect x="1025.9" y="882.5" width="1" height="35" fill="#a8a8a8"/>
<rect x="1017.1" y="847" width="18.6" height="3" fill="#212529"/>
<text x="1026.4" y="852.6" class="n" fill="#2c9e0c">10</text>
<rect x="1017.1" y="869" width="18.6" height="3" fill="#212529"/>
<text x="1026.4" y="874.6" class="n" fill="#0a84ff">7</text>
<rect x="1051.5" y="882.5" width="1" height="35" fill="#a8a8a8"/>
<rect x="1042.7" y="847" width="18.6" height="3" fill="#212529"/>
<text x="1052" y="852.6" class="n" fill="#2c9e0c">10</text>
<rect x="1042.7" y="869" width="18.6" height="3" fill="#212529"/>
<text x="1052" y="874.6" class="n" fill="#0a84ff">7</text>
<rect x="1077.1" y="882.5" width="1" height="35" fill="#a8a8a8"/>
<rect x="1068.3" y="847" width="18.6" height="3" fill="#212529"/>
<text x="1077.6" y="852.6" class="n" fill="#2c9e0c">10</text>
<rect x="1068.3" y="869" width="18.6" height="3" fill="#212529"/>
<text x="1077.6" y="874.6" class="n" fill="#0a84ff">7</text>
<rect x="1102.7" y="882.5" width="1" height="35" fill="#a8a8a8"/>
<rect x="1093.9" y="847" width="18.6" height="3" fill="#212529"/>
<text x="1103.2" y="852.6" class="n" fill="#2c9e0c">10</text>
<rect x="1093.9" y="869" width="18.6" height="3" fill="#212529"/>
<text x="1103.2" y="874.6" class="n" fill="#0a84ff">7</text>
<rect x="1128.3" y="882.5" width="1" height="35" fill="#a8a8a8"/>
<rect x="1119.5" y="847" width="18.6" height="3" fill="#212529"/>
<text x="1128.8" y="852.6" class="n" fill="#2c9e0c">10</text>
<rect x="1119.5" y="869" width="18.6" height="3" fill="#212529"/>
<text x="1128.8" y="874.6" class="n" fill="#0a84ff">7</text>
<rect x="1153.9" y="882.5" width="1" height="35" fill="#a8a8a8"/>
<rect x="1145.1" y="847" width="18.6" height="3" fill="#212529"/>
<text x="1154.4" y="852.6" class="n" fill="#2c9e0c">10</text>
<rect x="1145.1" y="869" width="18.6" height="3" fill="#212529"/>
<text x="1154.4" y="874.6" class="n" fill="#0a84ff">7</text>
<rect x="1179.5" y="882.5" width="1" height="35" fill="#a8a8a8"/>
<rect x="1170.7" y="847" width="18.6" height="3" fill="#212529"/>
<text x="1180" y="852.6" class="n" fill="#2c9e0c">12</text>
<rect x="1170.7" y="869" width="18.6" height="3" fill="#212529"/>
<text x="1180" y="874.6" class="n" fill="#0a84ff">9</text>
<rect x="1205.1" y="882.5" width="1" height="35" fill="#a8a8a8"/>
<rect x="1196.3" y="847" width="18.6" height="3" fill="#212529"/>
<text x="1205.6" y="852.6" class="n" fill="#2c9e0c">12</text>
<rect x="1196.3" y="869" width="18.6" height="3" fill="#212529"/>
<text x="1205.6" y="874.6" class="n" fill="#0a84ff">9</text>
<rect x="1230.7" y="882.5" width="1" height="35" fill="#a8a8a8"/>
<rect x="1221.9" y="847" width="18.6" height="3" fill="#212529"/>
<text x="1231.2" y="852.6" class="n" fill="#2c9e0c">12</text>
<rect x="1221.9" y="869" width="18.6" height="3" fill="#212529"/>
<text x="1231.2" y="874.6" class="n" fill="#0a84ff">9</text>
<rect x="1256.3" y="882.5" width="1" height="35" fill="#a8a8a8"/>
<rect x="1247.5" y="847" width="18.6" height="3" fill="#212529"/>
<text x="1256.8" y="852.6" class="n" fill="#2c9e0c">12</text>
<rect x="1247.5" y="869" width="18.6" height="3" fill="#212529"/>
<text x="1256.8" y="874.6" class="n" fill="#0a84ff">9</text>
<rect x="1281.9" y="882.5" width="1" height="35" fill="#a8a8a8"/>
<rect x="1273.1" y="847" width="18.6" height="3" fill="#212529"/>
<text x="1282.4" y="852.6" class="n" fill="#2c9e0c">13</text>
<rect x="1273.1" y="869" width="18.6" height="3" fill="#212529"/>
<text x="1282.4" y="874.6" class="n" fill="#0a84ff">10</text>
<rect x="1307.5" y="882.5" width="1" height="35" fill="#a8a8a8"/>
<rect x="1298.7" y="847" width="18.6" height="3" fill="#212529"/>
<text x="1308" y="852.6" class="n" fill="#2c9e0c">13</text>
<rect x="1298.7" y="869" width="18.6" height="3" fill="#212529"/>
<text x="1308" y="874.6" class="n" fill="#0a84ff">10</text>
<rect x="1333.1" y="882.5" width="1" height="35" fill="#a8a8a8"/>
<rect x="1324.3" y="847" width="18.6" height="3" fill="#212529"/>
<text x="1333.6" y="852.6" class="n" fill="#2c9e0c">13</text>
<rect x="1324.3" y="869" width="18.6" height="3" fill="#212529"/>
<text x="1333.6" y="874.6" class="n" fill="#0a84ff">10</text>
<rect x="1358.7" y="882.5" width="1" height="35" fill="#a8a8a8"/>
<rect x="1349.9" y="847" width="18.6" height="3" fill="#212529"/>
<text x="1359.2" y="852.6" class="n" fill="#2c9e0c">13</text>
<rect x="1349.9" y="869" width="18.6" height="3" fill="#212529"/>
<text x="1359.2" y="874.6" class="n" fill="#0a84ff">10</text>
<rect x="1410.7" y="913.5" width="77.8" height="4" fill="#a8a8a8"/>
<rect x="1410.7" y="907" width="77.8" height="4" fill="#a8a8a8"/>
<rect x="1513.1" y="913.5" width="77.8" height="4" fill="#a8a8a8"/>
<rect x="1513.1" y="907" width="77.8" height="4" fill="#a8a8a8"/>
<rect x="1615.5" y="913.5" width="77.8" height="4" fill="#a8a8a8"/>
<rect x="1615.5" y="907" width="77.8" height="4" fill="#a8a8a8"/>
<rect x="1717.9" y="913.5" width="77.8" height="4" fill="#a8a8a8"/>
<rect x="1717.9" y="907" width="77.8" height="4" fill="#a8a8a8"/>
<rect x="1410.7" y="882.5" width="1" height="35" fill="#a8a8a8"/>
<rect x="1401.9" y="847" width="18.6" height="3" fill="#212529"/>
<text x="1411.2" y="852.6" class="n" fill="#2c9e0c">15</text>
<rect x="1401.9" y="869" width="18.6" height="3" fill="#212529"/>
<text x="1411.2" y="874.6" class="n" fill="#0a84ff">12</text>
<rect x="1436.3" y="882.5" width="1" height="35" fill="#a8a8a8"/>
<rect x="1427.5" y="847" width="18.6" height="3" fill="#212529"/>
<text x="1436.8" y="852.6" class="n" fill="#2c9e0c">15</text>
<rect x="1427.5" y="869" width="18.6" height="3" fill="#212529"/>
<text x="1436.8" y="874.6" class="n" fill="#0a84ff">12</text>
<rect x="1461.9" y="882.5" width="1" height="35" fill="#a8a8a8"/>
<rect x="1453.1" y="847" width="18.6" height="3" fill="#212529"/>
<text x="1462.4" y="852.6" class="n" fill="#2c9e0c">15</text>
<rect x="1453.1" y="869" width="18.6" height="3" fill="#212529"/>
<text x="1462.4" y="874.6" class="n" fill="#0a84ff">12</text>
<rect x="1487.5" y="882.5" width="1" height="35" fill="#a8a8a8"/>
<rect x="1478.7" y="847" width="18.6" height="3" fill="#212529"/>
<text x="1488" y="852.6" class="n" fill="#2c9e0c">15</text>
<rect x="1478.7" y="869" width="18.6" height="3" fill="#212529"/>
<text x="1488" y="874.6" class="n" fill="#0a84ff">12</text>
<rect x="1513.1" y="882.5" width="1" height="35" fill="#a8a8a8"/>
<rect x="1504.3" y="847" width="18.6" height="3" fill="#212529"/>
<text x="1513.6" y="852.6" class="n" fill="#2c9e0c">15</text>
<rect x="1504.3" y="869" width="18.6" height="3" fill="#212529"/>
<text x="1513.6" y="874.6" class="n" fill="#0a84ff">12</text>
<rect x="1538.7" y="882.5" width="1" height="35" fill="#a8a8a8"/>
<rect x="1529.9" y="847" width="18.6" height="3" fill="#212529"/>
<text x="1539.2" y="852.6" class="n" fill="#2c9e0c">15</text>
<rect x="1529.9" y="869" width="18.6" height="3" fill="#212529"/>
<text x="1539.2" y="874.6" class="n" fill="#0a84ff">12</text>
<rect x="1564.3" y="882.5" width="1" height="35" fill="#a8a8a8"/>
<rect x="1555.5" y="847" width="18.6" height="3" fill="#212529"/>
<text x="1564.8" y="852.6" class="n" fill="#2c9e0c">15</text>
<rect x="1555.5" y="869" width="18.6" height="3" fill="#212529"/>
<text x="1564.8" y="874.6" class="n" fill="#0a84ff">12</text>
<rect x="1589.9" y="882.5" width="1" height="35" fill="#a8a8a8"/>
<rect x="1581.1" y="847" width="18.6" height="3" fill="#212529"/>
<text x="1590.4" y="852.6" class="n" fill="#2c9e0c">15</text>
<rect x="1581.1" y="869" width="18.6" height="3" fill="#212529"/>
<text x="1590.4" y="874.6" class="n" fill="#0a84ff">12</text>
<rect x="1615.5" y="882.5" width="1" height="35" fill="#a8a8a8"/>
<rect x="1606.7" y="847" width="18.6" height="3" fill="#212529"/>
<text x="1616" y="852.6" class="n" fill="#2c9e0c">17</text>
<rect x="1606.7" y="869" width="18.6" height="3" fill="#212529"/>
<text x="1616" y="874.6" class="n" fill="#0a84ff">14</text>
<rect x="1641.1" y="882.5" width="1" height="35" fill="#a8a8a8"/>
<rect x="1632.3" y="847" width="18.6" height="3" fill="#212529"/>
<text x="1641.6" y="852.6" class="n" fill="#2c9e0c">17</text>
<rect x="1632.3" y="869" width="18.6" height="3" fill="#212529"/>
<text x="1641.6" y="874.6" class="n" fill="#0a84ff">14</text>
<rect x="1666.7" y="882.5" width="1" height="35" fill="#a8a8a8"/>
<rect x="1657.9" y="847" width="18.6" height="3" fill="#212529"/>
<text x="1667.2" y="852.6" class="n" fill="#2c9e0c">17</text>
<rect x="1657.9" y="869" width="18.6" height="3" fill="#212529"/>
<text x="1667.2" y="874.6" class="n" fill="#0a84ff">14</text>
<rect x="1692.3" y="882.5" width="1" height="35" fill="#a8a8a8"/>
<rect x="1683.5" y="847" width="18.6" height="3" fill="#212529"/>
<text x="1692.8" y="852.6" class="n" fill="#2c9e0c">17</text>
<rect x="1683.5" y="869" width="18.6" height="3" fill="#212529"/>
<text x="1692.8" y="874.6" class="n" fill="#0a84ff">14</text>
<rect x="1717.9" y="882.5" width="1" height="35" fill="#a8a8a8"/>
<rect x="1709.1" y="847" width="18.6" height="3" fill="#212529"/>
<text x="1718.4" y="852.6" class="n" fill="#2c9e0c">15</text>
<rect x="1709.1" y="869" width="18.6" height="3" fill="#212529"/>
<text x="1718.4" y="874.6" class="n" fill="#0a84ff">12</text>
<rect x="1743.5" y="882.5" width="1" height="35" fill="#a8a8a8"/>
<rect x="1734.7" y="847" width="18.6" height="3" fill="#212529"/>
<text x="1744" y="852.6" class="n" fill="#2c9e0c">15</text>
<rect x="1734.7" y="869" width="18.6" height="3" fill="#212529"/>
<text x="1744" y="874.6" class="n" fill="#0a84ff">12</text>
<rect x="1769.1" y="882.5" width="1" height="35" fill="#a8a8a8"/>
<rect x="1760.3" y="847" width="18.6" height="3" fill="#212529"/>
<text x="1769.6" y="852.6" class="n" fill="#2c9e0c">15</text>
<rect x="1760.3" y="869" width="18.6" height="3" fill="#212529"/>
<text x="1769.6" y="874.6" class="n" fill="#0a84ff">12</text>
<rect x="1794.7" y="882.5" width="1" height="35" fill="#a8a8a8"/>
<rect x="1785.9" y="847" width="18.6" height="3" fill="#212529"/>
<text x="1795.2" y="852.6" class="n" fill="#2c9e0c">15</text>
<rect x="1785.9" y="869" width="18.6" height="3" fill="#212529"/>
<text x="1795.2" y="874.6" class="n" fill="#0a84ff">12</text>
<rect x="82" y="966" width="1741" height="1" fill="#6b6b6b"/>
<rect x="82" y="977" width="1741" height="1" fill="#6b6b6b"/>
<rect x="82" y="988" width="1741" height="1" fill="#6b6b6b"/>
<rect x="82" y="999" width="1741" height="1" fill="#6b6b6b"/>
<rect x="82" y="1010" width="1741" height="1" fill="#6b6b6b"/>
<rect x="82" y="1021" width="1741" height="1" fill="#6b6b6b"/>
<rect x="82" y="966" width="1" height="63" fill="#6e6e6e"/>
<rect x="335" y="966" width="1" height="63" fill="#6e6e6e"/>
<rect x="698" y="966" width="1" height="63" fill="#6e6e6e"/>
<rect x="877" y="966" width="1" height="63" fill="#6e6e6e"/>
<rect x="1057" y="966" width="1" height="63" fill="#6e6e6e"/>
<rect x="1135" y="966" width="1" height="63" fill="#6e6e6e"/>
<rect x="1212" y="966" width="1" height="63" fill="#6e6e6e"/>
<rect x="1290" y="966" width="1" height="63" fill="#6e6e6e"/>
<rect x="1465" y="966" width="1" height="63" fill="#6e6e6e"/>
<rect x="1641" y="966" width="1" height="63" fill="#6e6e6e"/>
<rect x="1822" y="966" width="1" height="63" fill="#6e6e6e"/>
<text x="110.5" y="962" class="bn">45</text>
<text x="336.5" y="962" class="bn">46</text>
<text x="699.5" y="962" class="bn">47</text>
<text x="878.5" y="962" class="bn">48</text>
<text x="1058.5" y="962" class="bn">49</text>
<text x="1136.5" y="962" class="bn">50</text>
<text x="1213.5" y="962" class="bn">51</text>
<text x="1291.5" y="962" class="bn">52</text>
<text x="1466.5" y="962" class="bn">53</text>
<text x="1642.5" y="962" class="bn">54</text>
<text x="94" y="984.5" class="clef">T</text>
<text x="94" y="1000.5" class="clef">A</text>
<text x="94" y="1016.5" class="clef">B</text>
<rect x="170" y="1000.5" width="1" height="28.5" fill="#a8a8a8"/>
<rect x="165.1" y="976" width="10.8" height="3" fill="#212529"/>
<text x="170.5" y="981.6" class="n" fill="#2c9e0c">8</text>
<rect x="201.5" y="1000.5" width="1" height="28.5" fill="#a8a8a8"/>
<rect x="196.6" y="976" width="10.8" height="3" fill="#212529"/>
<text x="202" y="981.6" class="n" fill="#2c9e0c">8</text>
<rect x="271.5" y="1000.5" width="1" height="28.5" fill="#a8a8a8"/>
<rect x="266.6" y="976" width="10.8" height="3" fill="#212529"/>
<text x="272" y="981.6" class="n" fill="#2c9e0c">7</text>
<rect x="302.5" y="1000.5" width="1" height="28.5" fill="#a8a8a8"/>
<rect x="381.5" y="985" width="1" height="44" fill="#a8a8a8"/>
<rect x="372.7" y="976" width="18.6" height="3" fill="#212529"/>
<text x="382" y="981.6" class="n" fill="#2c9e0c">12</text>
<rect x="421" y="985" width="1" height="44" fill="#a8a8a8"/>
<rect x="412.2" y="976" width="18.6" height="3" fill="#212529"/>
<text x="421.5" y="981.6" class="n" fill="#2c9e0c">12</text>
<rect x="459.5" y="985" width="1" height="44" fill="#a8a8a8"/>
<rect x="450.7" y="976" width="18.6" height="3" fill="#212529"/>
<text x="460" y="981.6" class="n" fill="#2c9e0c">12</text>
<rect x="512" y="985" width="1" height="44" fill="#a8a8a8"/>
<rect x="503.2" y="976" width="18.6" height="3" fill="#212529"/>
<text x="512.5" y="981.6" class="n" fill="#2c9e0c">15</text>
<rect x="565.5" y="985" width="1" height="44" fill="#a8a8a8"/>
<rect x="556.7" y="976" width="18.6" height="3" fill="#212529"/>
<text x="566" y="981.6" class="n" fill="#2c9e0c">15</text>
<rect x="618.5" y="985" width="1" height="44" fill="#a8a8a8"/>
<rect x="609.7" y="976" width="18.6" height="3" fill="#212529"/>
<text x="619" y="981.6" class="n" fill="#2c9e0c">15</text>
<rect x="670.5" y="985" width="1" height="44" fill="#a8a8a8"/>
<rect x="661.7" y="976" width="18.6" height="3" fill="#212529"/>
<text x="671" y="981.6" class="n" fill="#2c9e0c">15</text>
<rect x="723.5" y="985" width="1" height="44" fill="#a8a8a8"/>
<rect x="714.7" y="976" width="18.6" height="3" fill="#212529"/>
<text x="724" y="981.6" class="n" fill="#2c9e0c">15</text>
<rect x="762" y="985" width="1" height="44" fill="#a8a8a8"/>
<rect x="753.2" y="976" width="18.6" height="3" fill="#212529"/>
<text x="762.5" y="981.6" class="n" fill="#2c9e0c">15</text>
<rect x="903.5" y="985" width="1" height="44" fill="#a8a8a8"/>
<rect x="894.7" y="976" width="18.6" height="3" fill="#212529"/>
<text x="904" y="981.6" class="n" fill="#2c9e0c">15</text>
<rect x="941.9" y="985" width="1" height="44" fill="#a8a8a8"/>
<rect x="933.1" y="976" width="18.6" height="3" fill="#212529"/>
<text x="942.4" y="981.6" class="n" fill="#2c9e0c">15</text>
<rect x="979.9" y="985" width="1" height="44" fill="#a8a8a8"/>
<rect x="971.1" y="976" width="18.6" height="3" fill="#212529"/>
<text x="980.4" y="981.6" class="n" fill="#2c9e0c">13</text>
<rect x="1018.5" y="985" width="1" height="44" fill="#a8a8a8"/>
<rect x="1009.7" y="976" width="18.6" height="3" fill="#212529"/>
<text x="1019" y="981.6" class="n" fill="#2c9e0c">12</text>
<rect x="537.5" y="974" width="1" height="55" fill="#a8a8a8"/>
<rect x="528.7" y="965" width="18.6" height="3" fill="#212529"/>
<text x="538" y="970.6" class="n" fill="#bf50c3">12</text>
<rect x="591.5" y="974" width="1" height="55" fill="#a8a8a8"/>
<rect x="582.7" y="965" width="18.6" height="3" fill="#212529"/>
<text x="592" y="970.6" class="n" fill="#bf50c3">15</text>
<rect x="645" y="974" width="1" height="55" fill="#a8a8a8"/>
<rect x="636.2" y="965" width="18.6" height="3" fill="#212529"/>
<text x="645.5" y="970.6" class="n" fill="#bf50c3">15</text>
<rect x="800.5" y="974" width="1" height="55" fill="#a8a8a8"/>
<rect x="791.7" y="965" width="18.6" height="3" fill="#212529"/>
<text x="801" y="970.6" class="n" fill="#bf50c3">15</text>
<path d="M459,965.5 Q471.5,949.5 484,965.5 Q471.5,952.9 459,965.5 Z" fill="#aaaaaa"/>
<rect x="1076" y="988.4" width="10" height="5.6" fill="#aaaaaa" rx="0.8"/>
<rect x="1154" y="988.4" width="10" height="5.6" fill="#aaaaaa" rx="0.8"/>
<rect x="1231" y="988.4" width="10" height="5.6" fill="#aaaaaa" rx="0.8"/>
<rect x="1311.8" y="982" width="1" height="22" fill="#a8a8a8"/>
<rect x="1311.8" y="1016" width="1" height="13" fill="#a8a8a8"/>
<rect x="1306.9" y="965" width="10.8" height="3" fill="#212529"/>
<text x="1312.3" y="970.6" class="n" fill="#bf50c3">7</text>
<rect x="1306.9" y="976" width="10.8" height="3" fill="#212529"/>
<text x="1312.3" y="981.6" class="n" fill="#2c9e0c">8</text>
<rect x="1306.9" y="987" width="10.8" height="3" fill="#212529"/>
<text x="1312.3" y="992.6" class="n" fill="#f0883a">7</text>
<rect x="1306.9" y="1009" width="10.8" height="3" fill="#212529"/>
<text x="1312.3" y="1014.6" class="n" fill="#fff000">7</text>
<rect x="1350.2" y="982" width="1" height="22" fill="#a8a8a8"/>
<rect x="1350.2" y="1016" width="1" height="13" fill="#a8a8a8"/>
<rect x="1345.3" y="965" width="10.8" height="3" fill="#212529"/>
<text x="1350.7" y="970.6" class="n" fill="#bf50c3">7</text>
<rect x="1345.3" y="976" width="10.8" height="3" fill="#212529"/>
<text x="1350.7" y="981.6" class="n" fill="#2c9e0c">8</text>
<rect x="1345.3" y="987" width="10.8" height="3" fill="#212529"/>
<text x="1350.7" y="992.6" class="n" fill="#f0883a">7</text>
<rect x="1345.3" y="1009" width="10.8" height="3" fill="#212529"/>
<text x="1350.7" y="1014.6" class="n" fill="#fff000">7</text>
<rect x="1388.8" y="982" width="1" height="22" fill="#a8a8a8"/>
<rect x="1388.8" y="1016" width="1" height="13" fill="#a8a8a8"/>
<rect x="1383.9" y="965" width="10.8" height="3" fill="#212529"/>
<text x="1389.3" y="970.6" class="n" fill="#bf50c3">7</text>
<rect x="1383.9" y="976" width="10.8" height="3" fill="#212529"/>
<text x="1389.3" y="981.6" class="n" fill="#2c9e0c">8</text>
<rect x="1383.9" y="987" width="10.8" height="3" fill="#212529"/>
<text x="1389.3" y="992.6" class="n" fill="#f0883a">7</text>
<rect x="1383.9" y="1009" width="10.8" height="3" fill="#212529"/>
<text x="1389.3" y="1014.6" class="n" fill="#fff000">7</text>
<rect x="1427.2" y="982" width="1" height="22" fill="#a8a8a8"/>
<rect x="1427.2" y="1016" width="1" height="13" fill="#a8a8a8"/>
<rect x="1422.3" y="965" width="10.8" height="3" fill="#212529"/>
<text x="1427.7" y="970.6" class="n" fill="#bf50c3">7</text>
<rect x="1422.3" y="976" width="10.8" height="3" fill="#212529"/>
<text x="1427.7" y="981.6" class="n" fill="#2c9e0c">8</text>
<rect x="1422.3" y="987" width="10.8" height="3" fill="#212529"/>
<text x="1427.7" y="992.6" class="n" fill="#f0883a">7</text>
<rect x="1422.3" y="1009" width="10.8" height="3" fill="#212529"/>
<text x="1427.7" y="1014.6" class="n" fill="#fff000">7</text>
<rect x="1487.8" y="982" width="1" height="22" fill="#a8a8a8"/>
<rect x="1487.8" y="1027" width="1" height="2" fill="#a8a8a8"/>
<rect x="1482.9" y="965" width="10.8" height="3" fill="#212529"/>
<text x="1488.3" y="970.6" class="n" fill="#bf50c3">5</text>
<rect x="1482.9" y="976" width="10.8" height="3" fill="#212529"/>
<text x="1488.3" y="981.6" class="n" fill="#2c9e0c">5</text>
<rect x="1482.9" y="987" width="10.8" height="3" fill="#212529"/>
<text x="1488.3" y="992.6" class="n" fill="#f0883a">5</text>
<rect x="1482.9" y="1009" width="10.8" height="3" fill="#212529"/>
<text x="1488.3" y="1014.6" class="n" fill="#fff000">5</text>
<rect x="1482.9" y="1020" width="10.8" height="3" fill="#212529"/>
<text x="1488.3" y="1025.6" class="n" fill="#d0382c">5</text>
<rect x="1526.2" y="982" width="1" height="22" fill="#a8a8a8"/>
<rect x="1526.2" y="1027" width="1" height="2" fill="#a8a8a8"/>
<rect x="1521.3" y="965" width="10.8" height="3" fill="#212529"/>
<text x="1526.7" y="970.6" class="n" fill="#bf50c3">5</text>
<rect x="1521.3" y="976" width="10.8" height="3" fill="#212529"/>
<text x="1526.7" y="981.6" class="n" fill="#2c9e0c">5</text>
<rect x="1521.3" y="987" width="10.8" height="3" fill="#212529"/>
<text x="1526.7" y="992.6" class="n" fill="#f0883a">5</text>
<rect x="1521.3" y="1009" width="10.8" height="3" fill="#212529"/>
<text x="1526.7" y="1014.6" class="n" fill="#fff000">5</text>
<rect x="1521.3" y="1020" width="10.8" height="3" fill="#212529"/>
<text x="1526.7" y="1025.6" class="n" fill="#d0382c">5</text>
<rect x="1563.8" y="982" width="1" height="22" fill="#a8a8a8"/>
<rect x="1563.8" y="1027" width="1" height="2" fill="#a8a8a8"/>
<rect x="1558.9" y="965" width="10.8" height="3" fill="#212529"/>
<text x="1564.3" y="970.6" class="n" fill="#bf50c3">7</text>
<rect x="1558.9" y="976" width="10.8" height="3" fill="#212529"/>
<text x="1564.3" y="981.6" class="n" fill="#2c9e0c">7</text>
<rect x="1558.9" y="987" width="10.8" height="3" fill="#212529"/>
<text x="1564.3" y="992.6" class="n" fill="#f0883a">7</text>
<rect x="1558.9" y="1009" width="10.8" height="3" fill="#212529"/>
<text x="1564.3" y="1014.6" class="n" fill="#fff000">7</text>
<rect x="1558.9" y="1020" width="10.8" height="3" fill="#212529"/>
<text x="1564.3" y="1025.6" class="n" fill="#d0382c">7</text>
<rect x="1602.2" y="982" width="1" height="22" fill="#a8a8a8"/>
<rect x="1602.2" y="1027" width="1" height="2" fill="#a8a8a8"/>
<rect x="1597.3" y="965" width="10.8" height="3" fill="#212529"/>
<text x="1602.7" y="970.6" class="n" fill="#bf50c3">7</text>
<rect x="1597.3" y="976" width="10.8" height="3" fill="#212529"/>
<text x="1602.7" y="981.6" class="n" fill="#2c9e0c">7</text>
<rect x="1597.3" y="987" width="10.8" height="3" fill="#212529"/>
<text x="1602.7" y="992.6" class="n" fill="#f0883a">7</text>
<rect x="1597.3" y="1009" width="10.8" height="3" fill="#212529"/>
<text x="1602.7" y="1014.6" class="n" fill="#fff000">7</text>
<rect x="1597.3" y="1020" width="10.8" height="3" fill="#212529"/>
<text x="1602.7" y="1025.6" class="n" fill="#d0382c">7</text>
<rect x="1666.8" y="982" width="1" height="22" fill="#a8a8a8"/>
<rect x="1666.8" y="1027" width="1" height="2" fill="#a8a8a8"/>
<rect x="1658" y="965" width="18.6" height="3" fill="#212529"/>
<text x="1667.3" y="970.6" class="n" fill="#bf50c3">8</text>
<rect x="1658" y="976" width="18.6" height="3" fill="#212529"/>
<text x="1667.3" y="981.6" class="n" fill="#2c9e0c">8</text>
<rect x="1658" y="987" width="18.6" height="3" fill="#212529"/>
<text x="1667.3" y="992.6" class="n" fill="#f0883a">8</text>
<rect x="1658" y="1009" width="18.6" height="3" fill="#212529"/>
<text x="1667.3" y="1014.6" class="n" fill="#fff000">10</text>
<rect x="1658" y="1020" width="18.6" height="3" fill="#212529"/>
<text x="1667.3" y="1025.6" class="n" fill="#d0382c">8</text>
<rect x="1705.5" y="982" width="1" height="22" fill="#a8a8a8"/>
<rect x="1705.5" y="1027" width="1" height="2" fill="#a8a8a8"/>
<rect x="1696.7" y="965" width="18.6" height="3" fill="#212529"/>
<text x="1706" y="970.6" class="n" fill="#bf50c3">8</text>
<rect x="1696.7" y="976" width="18.6" height="3" fill="#212529"/>
<text x="1706" y="981.6" class="n" fill="#2c9e0c">8</text>
<rect x="1696.7" y="987" width="18.6" height="3" fill="#212529"/>
<text x="1706" y="992.6" class="n" fill="#f0883a">8</text>
<rect x="1696.7" y="1009" width="18.6" height="3" fill="#212529"/>
<text x="1706" y="1014.6" class="n" fill="#fff000">10</text>
<rect x="1696.7" y="1020" width="18.6" height="3" fill="#212529"/>
<text x="1706" y="1025.6" class="n" fill="#d0382c">8</text>
<rect x="1743.8" y="982" width="1" height="22" fill="#a8a8a8"/>
<rect x="1743.8" y="1027" width="1" height="2" fill="#a8a8a8"/>
<rect x="1735" y="965" width="18.6" height="3" fill="#212529"/>
<text x="1744.3" y="970.6" class="n" fill="#bf50c3">8</text>
<rect x="1735" y="976" width="18.6" height="3" fill="#212529"/>
<text x="1744.3" y="981.6" class="n" fill="#2c9e0c">8</text>
<rect x="1735" y="987" width="18.6" height="3" fill="#212529"/>
<text x="1744.3" y="992.6" class="n" fill="#f0883a">8</text>
<rect x="1735" y="1009" width="18.6" height="3" fill="#212529"/>
<text x="1744.3" y="1014.6" class="n" fill="#fff000">10</text>
<rect x="1735" y="1020" width="18.6" height="3" fill="#212529"/>
<text x="1744.3" y="1025.6" class="n" fill="#d0382c">8</text>
<rect x="1782.2" y="982" width="1" height="22" fill="#a8a8a8"/>
<rect x="1782.2" y="1027" width="1" height="2" fill="#a8a8a8"/>
<rect x="1773.4" y="965" width="18.6" height="3" fill="#212529"/>
<text x="1782.7" y="970.6" class="n" fill="#bf50c3">8</text>
<rect x="1773.4" y="976" width="18.6" height="3" fill="#212529"/>
<text x="1782.7" y="981.6" class="n" fill="#2c9e0c">8</text>
<rect x="1773.4" y="987" width="18.6" height="3" fill="#212529"/>
<text x="1782.7" y="992.6" class="n" fill="#f0883a">8</text>
<rect x="1773.4" y="1009" width="18.6" height="3" fill="#212529"/>
<text x="1782.7" y="1014.6" class="n" fill="#fff000">10</text>
<rect x="1773.4" y="1020" width="18.6" height="3" fill="#212529"/>
<text x="1782.7" y="1025.6" class="n" fill="#d0382c">8</text>
<rect x="452.800" y="412" width="2.900" height="99.500" fill="#1f7f22" opacity="0.920"/>
</svg>

<!-- bottom toolbar -->
<div class="abs" id="blur"></div>
<div class="abs btn dark" style="left:14px;width:155px">Overdriven Guitar</div>
<div class="abs btn dark" style="left:179px;width:72px">Audio</div>
<div class="abs btn" style="left:261px;width:88px;padding-left:3px;background:#28279f"><svg width="13" height="15" viewBox="0 0 13 15" style="vertical-align:-0.500px;margin-right:7px"><path d="M1,1 L12,7.500 L1,14 Z" fill="#fff" stroke="#fff" stroke-width="1.500" stroke-linejoin="round"/></svg><span style="position:relative;top:-1px">Play</span></div>
<div class="abs btn sec" style="left:362px;width:61.500px">Loop</div>
<div class="abs btn sec" style="left:434px;width:86px">Count in</div>
<div class="abs btn sec" style="left:530px;width:110px">Metronome</div>
<div class="abs" style="left:649.500px;top:989px;font-size:16px;line-height:22px;color:#e6e8ea;white-space:nowrap;letter-spacing:-0.55px">Speed:</div>
<div class="abs" style="left:697px;top:981px;width:103px;height:36px;border-radius:5px;background:#212529"></div>
<div class="abs" style="left:710px;top:989px;font-size:16px;line-height:22px;color:#eceeef">100</div>
<div class="abs" style="left:800.500px;top:989px;font-size:16px;line-height:22px;color:#e6e8ea">(%)</div>
<div class="abs btn sec" style="left:1837px;width:52px">Edit</div>

<!-- scrollbar -->
<div class="abs" id="sb"></div>
<div class="abs" id="thumb"></div>
<svg class="abs" style="left:1904px;top:119px" width="15" height="910" viewBox="0 0 15 910"><path d="M7.500,5 L12,12 L3,12 Z" fill="#9f9f9f"/><path d="M7.500,905 L12,898 L3,898 Z" fill="#9f9f9f"/></svg>

<!-- annotation -->
<svg class="abs" style="left:190px;top:820px" width="160" height="175" viewBox="190 820 160 175">
  <path d="M264.600,920.500 L283.900,908 L303,936.800 L321.400,924.600 L318.400,980.400 L267.600,960 L282.800,949 Z" fill="#80b4ff" stroke="#27364f" stroke-width="2.600" stroke-linejoin="round"/>
  <mask id="m1" maskUnits="userSpaceOnUse" x="200" y="830" width="110" height="100"><rect x="200" y="830" width="110" height="100" fill="#fff"/><text x="252.500" y="899.300" text-anchor="middle" font-family="Liberation Sans, sans-serif" font-weight="bold" font-size="60" fill="#000">1</text><rect x="236" y="889" width="14.100" height="14" fill="#fff"/><rect x="257.900" y="889" width="14" height="14" fill="#fff"/></mask>
  <circle cx="252.400" cy="878" r="43.300" fill="#ff9a00" mask="url(#m1)"/>
</svg>
</body></html>
